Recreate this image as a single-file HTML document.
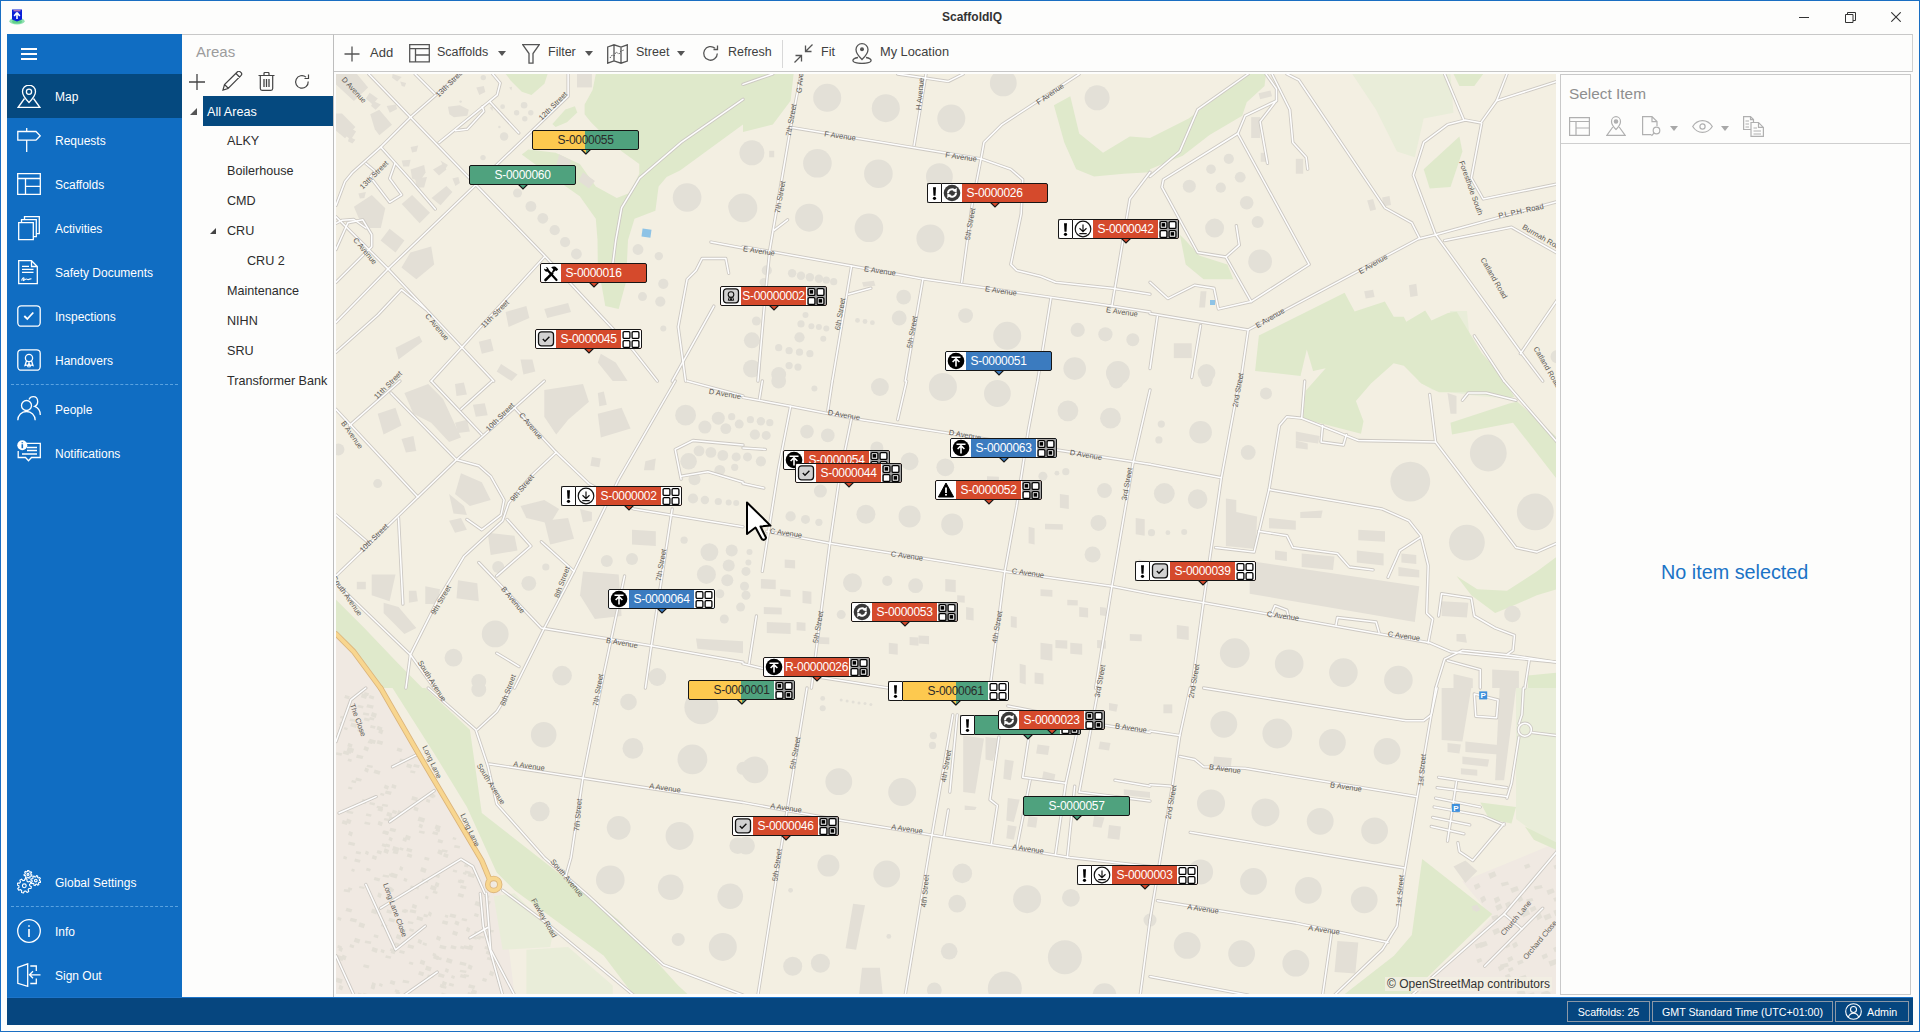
<!DOCTYPE html>
<html><head><meta charset="utf-8">
<style>
*{margin:0;padding:0;box-sizing:border-box}
html,body{width:1920px;height:1032px;overflow:hidden;background:#fcfcfc;font-family:"Liberation Sans",sans-serif}
.a{position:absolute}
#win{position:absolute;left:0;top:0;width:1920px;height:1032px;border:1px solid #1a6ec2;background:#fdfdfc}
.t{position:absolute;white-space:nowrap;line-height:1}
#side{left:7px;top:34px;width:175px;height:963px;background:#106dc2}
.nav{position:absolute;left:0;width:175px;height:44px}
.nav .t{left:48px;top:15px;color:#fff;font-size:12px}
.nav svg{position:absolute;left:9px;top:10px}
.sep{position:absolute;left:4px;width:167px;height:0;border-top:1px dashed #5aa2e0}
#areas{left:182px;top:34px;width:152px;height:963px;border-top:1px solid #c8c8c8;border-right:1px solid #bdbdbd;background:#fdfdfc}
.tr{position:absolute;font-size:12.6px;color:#2c2c2c;white-space:nowrap;line-height:1}
#tb{left:334px;top:34px;width:1579px;height:38px;border-top:1px solid #c8c8c8;border-bottom:1px solid #c6c6c6;border-right:1px solid #d0d0d0;background:#fdfdfc}
.tbt{position:absolute;top:11px;font-size:13px;color:#404040;line-height:1;white-space:nowrap}
#map{left:336px;top:74px;width:1220px;height:920px;overflow:hidden;background:#f3efe2}
#rp{left:1560px;top:74px;width:351px;height:921px;border:1px solid #c9c9c9;background:#fdfdfc}
#status{left:7px;top:997px;width:1906px;height:28px;background:#06467f;border-top:1px solid #1d74c9}
.sb{position:absolute;top:3px;height:21px;border:1px solid #8c98a6;color:#fff;font-size:10.7px;line-height:21px;text-align:center;white-space:nowrap}
.mk{position:absolute;width:107px;height:20px;border:1px solid #161616;border-radius:2px;overflow:hidden;font-size:12px;letter-spacing:-0.3px;line-height:18px;text-align:center;white-space:nowrap}
.mk span{position:relative}
.mx{position:absolute;width:14px;height:20px;border:1px solid #161616;border-right:none;border-radius:2px 0 0 2px;background:#fff}
.mx svg{position:absolute;left:0;top:0}
</style></head><body>
<div id="win">
</div>
<!-- title bar -->
<svg class="a" style="left:8px;top:8px" width="20" height="18" viewBox="0 0 20 18">
  <ellipse cx="9" cy="13.2" rx="7.6" ry="3.4" fill="#8fe0b0"/>
  <ellipse cx="9" cy="13.6" rx="5" ry="2" fill="#5fd08a"/>
  <path d="M4 1.5H14V11.5L9 13.5 4 11.5z" fill="#0a1fd8"/>
  <path d="M9 4.5L6.2 8 M9 4.5L11.8 8 M9 4.6V11" stroke="#fff" stroke-width="1.6" fill="none"/>
  <rect x="5.5" y="2.3" width="7" height="1" fill="#f48fb0"/>
</svg>
<div class="t" style="left:942px;top:11px;font-size:12px;font-weight:bold;color:#333">ScaffoldIQ</div>
<div class="a" style="left:1799px;top:17px;width:10px;height:1px;background:#333"></div>
<svg class="a" style="left:1845px;top:12px" width="11" height="11" viewBox="0 0 11 11"><path d="M0.5 2.5h7.5v8h-7.5z M2.5 2.5V0.5h8v8H8" fill="none" stroke="#333" stroke-width="1"/></svg>
<svg class="a" style="left:1891px;top:12px" width="10" height="10" viewBox="0 0 10 10"><path d="M0.3 0.3L9.7 9.7M9.7 0.3L0.3 9.7" stroke="#333" stroke-width="1.1"/></svg>

<svg class="a" style="left:1906px;top:1018px" width="8" height="8" viewBox="0 0 8 8"><g fill="#555"><rect x="6" y="0" width="1" height="1"/><rect x="4" y="2" width="1" height="1"/><rect x="6" y="2" width="1" height="1"/><rect x="2" y="4" width="1" height="1"/><rect x="4" y="4" width="1" height="1"/><rect x="6" y="4" width="1" height="1"/><rect x="0" y="6" width="1" height="1"/><rect x="2" y="6" width="1" height="1"/><rect x="4" y="6" width="1" height="1"/><rect x="6" y="6" width="1" height="1"/></g></svg>
<div id="side" class="a">
<div class="a" style="left:14px;top:14px;width:16px;height:2px;background:#fff"></div>
<div class="a" style="left:14px;top:19px;width:16px;height:2px;background:#fff"></div>
<div class="a" style="left:14px;top:24px;width:16px;height:2px;background:#fff"></div>
<div class="a" style="left:0;top:40px;width:175px;height:44px;background:#05497f"></div>
<!-- Map -->
<svg class="a" style="left:10px;top:50px" width="24" height="24" viewBox="0 0 24 24" fill="none" stroke="#fff" stroke-width="1.3">
<path d="M12 1.2C8.2 1.2 5.5 4 5.5 7.7c0 4 6.5 10.8 6.5 10.8s6.5-6.8 6.5-10.8C18.5 4 15.8 1.2 12 1.2z"/><circle cx="12" cy="7.8" r="2.6"/><path d="M7.5 14.5L1.2 23.3h21.6L16.5 14.5"/></svg>
<div class="t" style="left:48px;top:57px;font-size:12px;color:#fff">Map</div>
<!-- Requests -->
<svg class="a" style="left:10px;top:94px" width="24" height="24" viewBox="0 0 24 24" fill="none" stroke="#fff" stroke-width="1.3">
<path d="M0.8 3.5H19l4.2 4.3L19 12.2H0.8z M9.7 0V3.5 M9.7 12.2V24"/></svg>
<div class="t" style="left:48px;top:101px;font-size:12px;color:#fff">Requests</div>
<!-- Scaffolds -->
<svg class="a" style="left:10px;top:139px" width="24" height="22" viewBox="0 0 24 22" fill="none" stroke="#fff" stroke-width="1.3">
<path d="M0.7 0.7H23.3V21.3H0.7z M0.7 5.5H23.3 M8.5 5.5V21.3 M8.5 13.3H23.3"/></svg>
<div class="t" style="left:48px;top:145px;font-size:12px;color:#fff">Scaffolds</div>
<!-- Activities -->
<svg class="a" style="left:10px;top:182px" width="24" height="25" viewBox="0 0 24 25" fill="none" stroke="#fff" stroke-width="1.3">
<path d="M1.7 6.7H16.3V23.7H1.7z M4.5 6.7V3.7H19.3V20.7H16.3 M7.5 3.7V0.7H22.3V17.7H19.3"/></svg>
<div class="t" style="left:48px;top:189px;font-size:12px;color:#fff">Activities</div>
<!-- Safety Documents -->
<svg class="a" style="left:10px;top:226px" width="24" height="25" viewBox="0 0 24 25" fill="none" stroke="#fff" stroke-width="1.3">
<path d="M1.7 0.7H14.5L20.3 6.5V23.7H1.7z M14.5 0.7V6.5H20.3 M5 6.3H12 M5 9.3H16.5 M5 12.3H16.5"/><path d="M4.5 20.5c1-2 2-3.5 2.5-2.5s-1.5 3-.5 2.5 2-1.5 3-1.5 1 1 2 .5 2-1 3-.5" stroke-width="1.1"/></svg>
<div class="t" style="left:48px;top:233px;font-size:12px;color:#fff">Safety Documents</div>
<!-- Inspections -->
<svg class="a" style="left:10px;top:271px" width="24" height="22" viewBox="0 0 24 22" fill="none" stroke="#fff" stroke-width="1.3">
<rect x="0.8" y="0.8" width="22.4" height="20.4" rx="3.5"/><path d="M7.3 11l3 3 6-6.5" stroke-width="1.8"/></svg>
<div class="t" style="left:48px;top:277px;font-size:12px;color:#fff">Inspections</div>
<!-- Handovers -->
<svg class="a" style="left:10px;top:315px" width="24" height="22" viewBox="0 0 24 22" fill="none" stroke="#fff" stroke-width="1.3">
<rect x="0.8" y="0.8" width="22.4" height="20.4" rx="3.5"/><circle cx="12" cy="9" r="3.6"/><path d="M9.5 11.8L8 16.5l2-.6 1 1.6 1-3.5 1 3.5 1-1.6 2 .6-1.5-4.7"/></svg>
<div class="t" style="left:48px;top:321px;font-size:12px;color:#fff">Handovers</div>
<div class="sep" style="top:350px"></div>
<!-- People -->
<svg class="a" style="left:10px;top:362px" width="24" height="25" viewBox="0 0 24 25" fill="none" stroke="#fff" stroke-width="1.3">
<circle cx="9.5" cy="9.5" r="5"/><path d="M0.8 24.3c0-5.3 3.9-8.8 8.7-8.8s8.7 3.5 8.7 8.8"/><path d="M12 3.5c.8-1.8 2.4-2.8 4.2-2.8 2.8 0 4.5 2.2 4.5 5 0 2.2-1.2 4-3 4.6 3.4 1.3 5.6 4.5 5.6 8.6"/></svg>
<div class="t" style="left:48px;top:370px;font-size:12px;color:#fff">People</div>
<!-- Notifications -->
<svg class="a" style="left:10px;top:406px" width="24" height="24" viewBox="0 0 24 24" fill="none" stroke="#fff" stroke-width="1.3">
<path d="M7 3.3H23.3V17.5H14.5L11.5 20.8 8.5 17.5H1.2V11"/><path d="M10 7.5H20 M10 10.5H20 M5 14H20"/><circle cx="5.3" cy="5.3" r="5" fill="#fff" stroke="none"/><path d="M5.3 4.3V8.3 M5.3 2.2V3.2" stroke="#106dc2" stroke-width="1.6"/></svg>
<div class="t" style="left:48px;top:414px;font-size:12px;color:#fff">Notifications</div>
<!-- Global Settings -->
<svg class="a" style="left:10px;top:836px" width="24" height="24" viewBox="0 0 24 24" fill="none" stroke="#fff" stroke-width="1.1" stroke-linejoin="round"><path d="M12.70 15.80 L14.45 16.65 L13.95 18.56 L12.01 18.44 L11.12 19.62 L11.76 21.45 L10.06 22.45 L8.77 21.00 L7.30 21.20 L6.45 22.95 L4.54 22.45 L4.66 20.51 L3.48 19.62 L1.65 20.26 L0.65 18.56 L2.10 17.27 L1.90 15.80 L0.15 14.95 L0.65 13.04 L2.59 13.16 L3.48 11.98 L2.84 10.15 L4.54 9.15 L5.83 10.60 L7.30 10.40 L8.15 8.65 L10.06 9.15 L9.94 11.09 L11.12 11.98 L12.95 11.34 L13.95 13.04 L12.50 14.33Z"/><circle cx="7.3" cy="15.8" r="1.9"/><path d="M22.50 10.60 L23.77 11.19 L23.42 12.51 L22.03 12.41 L21.42 13.22 L21.90 14.53 L20.71 15.22 L19.80 14.16 L18.80 14.30 L18.21 15.57 L16.89 15.22 L16.99 13.83 L16.18 13.22 L14.87 13.70 L14.18 12.51 L15.24 11.60 L15.10 10.60 L13.83 10.01 L14.18 8.69 L15.57 8.79 L16.18 7.98 L15.70 6.67 L16.89 5.98 L17.80 7.04 L18.80 6.90 L19.39 5.63 L20.71 5.98 L20.61 7.37 L21.42 7.98 L22.73 7.50 L23.42 8.69 L22.36 9.60Z"/><circle cx="18.8" cy="10.6" r="1.3"/><path d="M13.90 4.40 L14.96 4.94 L14.60 6.14 L13.42 6.00 L12.81 6.67 L13.05 7.83 L11.89 8.30 L11.26 7.29 L10.35 7.23 L9.59 8.14 L8.51 7.53 L8.90 6.40 L8.39 5.66 L7.20 5.64 L7.00 4.40 L8.13 4.01 L8.39 3.14 L7.66 2.20 L8.51 1.27 L9.51 1.91 L10.35 1.57 L10.64 0.42 L11.89 0.50 L12.02 1.68 L12.81 2.13 L13.89 1.64 L14.60 2.66 L13.76 3.50Z"/><circle cx="11" cy="4.4" r="1.0"/></svg>
<div class="t" style="left:48px;top:843px;font-size:12px;color:#fff">Global Settings</div>
<div class="sep" style="top:872px"></div>
<!-- Info -->
<svg class="a" style="left:10px;top:885px" width="24" height="24" viewBox="0 0 24 24" fill="none" stroke="#fff" stroke-width="1.3">
<circle cx="12" cy="12" r="11.3"/><path d="M12 10V18 M12 6.2V7.8" stroke-width="1.6"/></svg>
<div class="t" style="left:48px;top:892px;font-size:12px;color:#fff">Info</div>
<!-- Sign Out -->
<svg class="a" style="left:10px;top:929px" width="24" height="24" viewBox="0 0 24 24" fill="none" stroke="#fff" stroke-width="1.3">
<path d="M0.8 4.3L10.7 0.8V23.3L0.8 20.3z M13.3 3H19.3V8 M13.3 20.5H19.3V15.5 M12.5 11.8H23.5 M16 8.3L12.5 11.8 16 15.3"/></svg>
<div class="t" style="left:48px;top:936px;font-size:12px;color:#fff">Sign Out</div>
</div>
<div id="areas" class="a">
<div class="t" style="left:14px;top:9px;font-size:15px;color:#9c9c9c">Areas</div>
<svg class="a" style="left:7px;top:39px" width="16" height="16" viewBox="0 0 16 16" stroke="#444" stroke-width="1.3"><path d="M8 0V16 M0 8H16"/></svg>
<svg class="a" style="left:40px;top:36px" width="21" height="20" viewBox="0 0 21 20" fill="none" stroke="#444" stroke-width="1.2"><path d="M1 19L2.5 13.5 15.5 0.8c.8-.7 2-.7 2.7 0l.9.9c.7.7.7 1.9 0 2.7L6.1 17.5z M2.5 13.5l4 4 M14 2.5l4 4"/></svg>
<svg class="a" style="left:76px;top:37px" width="17" height="19" viewBox="0 0 17 19" fill="none" stroke="#444" stroke-width="1.2"><path d="M0.5 3.5H16.5 M6 3.3V1.5c0-.6.4-1 1-1h3c.6 0 1 .4 1 1v1.8 M2.3 3.5V16.5c0 1 .8 1.8 1.8 1.8h8.8c1 0 1.8-.8 1.8-1.8V3.5"/><path d="M6 7V15 M8.5 7V15 M11 7V15" stroke-width="1.3"/></svg>
<svg class="a" style="left:112px;top:39px" width="16" height="16" viewBox="0 0 16 16" fill="none" stroke="#444" stroke-width="1.2"><path d="M14.2 7.5A6.3 6.3 0 1 1 12 3.1"/><path d="M14.5 0.5V4.5H10.5"/></svg>
<div class="a" style="left:21px;top:61px;width:130px;height:30px;background:#05497f"></div>
<svg class="a" style="left:8px;top:73px" width="7" height="7" viewBox="0 0 7 7"><path d="M7 0V7H0z" fill="#555"/></svg>
<div class="tr" style="left:25px;top:71px;color:#fff">All Areas</div>
<div class="tr" style="left:45px;top:100px">ALKY</div>
<div class="tr" style="left:45px;top:130px">Boilerhouse</div>
<div class="tr" style="left:45px;top:160px">CMD</div>
<svg class="a" style="left:28px;top:193px" width="6" height="6" viewBox="0 0 6 6"><path d="M6 0V6H0z" fill="#444"/></svg>
<div class="tr" style="left:45px;top:190px">CRU</div>
<div class="tr" style="left:65px;top:220px">CRU 2</div>
<div class="tr" style="left:45px;top:250px">Maintenance</div>
<div class="tr" style="left:45px;top:280px">NIHN</div>
<div class="tr" style="left:45px;top:310px">SRU</div>
<div class="tr" style="left:45px;top:340px">Transformer Bank</div>
</div>
<div id="tb" class="a">
<svg class="a" style="left:10px;top:11px" width="16" height="16" viewBox="0 0 16 16" stroke="#555" stroke-width="1.3"><path d="M8 0.5V15.5 M0.5 8H15.5"/></svg>
<div class="tbt" style="left:36px">Add</div>
<svg class="a" style="left:75px;top:9px" width="21" height="19" viewBox="0 0 21 19" fill="none" stroke="#555" stroke-width="1.3"><path d="M0.7 0.7H20.3V17.8H0.7z M0.7 4.7H20.3 M6.5 4.7V17.8 M6.5 11H20.3"/></svg>
<div class="tbt" style="left:103px;font-size:12.5px">Scaffolds</div>
<svg class="a" style="left:164px;top:16px" width="8" height="5" viewBox="0 0 8 5"><path d="M0 0H8L4 5z" fill="#555"/></svg>
<svg class="a" style="left:188px;top:9px" width="18" height="20" viewBox="0 0 18 20" fill="none" stroke="#555" stroke-width="1.3"><path d="M0.7 0.7H17.3L11 9.5V19.2H7V9.5z"/></svg>
<div class="tbt" style="left:214px;font-size:12.5px">Filter</div>
<svg class="a" style="left:251px;top:16px" width="8" height="5" viewBox="0 0 8 5"><path d="M0 0H8L4 5z" fill="#555"/></svg>
<svg class="a" style="left:273px;top:9px" width="21" height="20" viewBox="0 0 21 20" fill="none" stroke="#555" stroke-width="1.3"><path d="M0.7 3L7 0.8 14 3 20.3 0.8V17L14 19.2 7 17 0.7 19.2z M7 0.8V17 M14 3V19.2"/><path d="M3 14l2-3 2 1 2-4 3 2 2-3 3-1" stroke-width="1" stroke-dasharray="1.5 1.2"/></svg>
<div class="tbt" style="left:302px;font-size:12.5px">Street</div>
<svg class="a" style="left:343px;top:16px" width="8" height="5" viewBox="0 0 8 5"><path d="M0 0H8L4 5z" fill="#555"/></svg>
<svg class="a" style="left:368px;top:10px" width="17" height="17" viewBox="0 0 17 17" fill="none" stroke="#555" stroke-width="1.3"><path d="M15.3 8.5A6.8 6.8 0 1 1 13 3.3"/><path d="M15.5 0.5V4.5H11.5"/></svg>
<div class="tbt" style="left:394px;font-size:12.5px">Refresh</div>
<div class="a" style="left:448px;top:5px;width:1px;height:28px;background:#d8d8d8"></div>
<svg class="a" style="left:459px;top:8px" width="21" height="21" viewBox="0 0 21 21" fill="none" stroke="#555" stroke-width="1.3"><path d="M19.5 1.5L12.5 8.5 M12.5 2.5V8.5H18.5 M1.5 19.5L8.5 12.5 M2.5 12.5H8.5V18.5"/></svg>
<div class="tbt" style="left:487px;font-size:12.5px">Fit</div>
<svg class="a" style="left:518px;top:8px" width="20" height="21" viewBox="0 0 20 21" fill="none" stroke="#555" stroke-width="1.3"><path d="M10 16.5S4 10.8 4 6.5C4 3.2 6.7 0.7 10 0.7s6 2.5 6 5.8c0 4.3-6 10-6 10z"/><circle cx="10" cy="6.3" r="2" fill="#555" stroke="none"/><path d="M6 14.5C3 15 0.9 16.2 0.9 17.6c0 1.6 4 2.8 9.1 2.8s9.1-1.2 9.1-2.8c0-1.4-2.1-2.6-5.1-3.1"/></svg>
<div class="tbt" style="left:546px;font-size:12.8px">My Location</div>
</div>
<div id="map" class="a"><!--MAPSTART--><svg class="a" style="left:0;top:0" width="1220" height="920" viewBox="0 0 1220 920">
<g fill="#f0e9e2"><polygon points="0.0,561.4 17.9,579.2 44.6,614.1 0.0,614.1"/><polygon points="0.0,614.0 44.6,614.0 145.8,786.6 166.6,822.3 178.5,921.1 0.0,921.1"/><polygon points="1126.4,807.4 1221.0,768.7 1221.0,921.1 1081.8,921.1 1156.2,843.1"/></g>
<g fill="#e9edd9"><polygon points="1016.3,0.0 1114.5,0.0 1117.5,38.7 1087.7,44.6 1078.8,83.3 1061.0,77.4 1040.1,35.7"/><polygon points="1081.8,307.0 1171.0,307.0 1177.0,324.9 1141.3,321.9 1096.7,315.9"/><polygon points="157.7,822.3 178.5,819.3 217.2,858.0 214.2,872.9 166.6,875.8"/><polygon points="190.4,875.8 232.1,872.9 276.7,911.5 276.7,921.1 190.4,921.1"/><polygon points="1180.0,614.0 1221.0,614.0 1221.0,774.7 1180.0,744.9"/><polygon points="1114.0,237.0 1131.0,237.0 1138.0,309.0 1122.0,311.0"/></g>
<g fill="#dfe9cb"><polygon points="407.0,0.0 457.6,0.0 454.6,26.8 436.8,50.6 407.0,58.0"/><polygon points="717.9,31.2 734.3,22.3 743.2,59.5 767.0,78.8 793.8,62.5 814.0,64.0 814.0,98.2 787.8,99.7 758.1,102.6 740.2,95.2 728.3,68.4"/><polygon points="814.0,64.0 852.7,44.6 912.2,0.0 930.0,0.0 928.5,11.9 910.7,28.3 906.2,41.7 873.5,61.0 846.7,81.8 814.0,95.2"/><polygon points="1087.7,95.2 1123.4,62.5 1126.4,77.4 1114.5,113.1 1093.7,114.5"/><polygon points="843.8,160.7 849.7,166.6 863.1,181.5 891.4,190.4 897.3,205.3 867.6,205.3 849.7,190.4"/><polygon points="1117.5,0.0 1147.2,0.0 1138.3,11.9 1123.4,11.9"/><polygon points="0.0,525.7 28.3,554.0 59.5,586.7 86.3,614.1 47.6,614.1 26.8,589.7 11.9,568.8 0.0,559.9"/><polygon points="1114.5,348.7 1174.0,329.3 1181.5,327.8 1221.0,363.5 1221.0,405.2 1177.0,348.7 1116.0,360.6"/><polygon points="1120.5,501.9 1141.3,515.3 1171.0,516.8 1200.8,497.4 1221.0,482.5 1221.0,515.3 1200.8,521.2 1174.0,533.1 1159.1,539.1 1135.3,521.2"/><polygon points="1191.9,601.6 1221.0,598.6 1221.0,614.1 1191.9,614.1"/><polygon points="56.5,614.0 89.3,614.0 133.9,655.7 145.8,739.0 214.2,792.5 282.7,846.1 342.2,911.5 352.6,921.1 297.5,921.1 267.8,881.8 178.5,816.3 160.7,798.5 130.9,733.0 98.2,679.5"/><polygon points="1086.2,785.1 1156.2,840.1 1072.9,921.1 1007.4,921.1 1058.0,881.8 1075.8,861.0"/><polygon points="1144.3,728.5 1180.0,733.0 1175.5,749.4 1153.2,744.9"/><polygon points="1188.9,752.4 1221.0,768.7 1221.0,776.2 1197.8,765.7"/><polygon points="259.8,0.0 407.0,0.0 407.0,50.6 344.0,96.5 330.6,103.0 322.6,112.6 319.4,136.8 298.5,144.8 292.0,166.0 290.0,208.0 282.7,235.0 269.3,232.0 261.8,190.4 261.5,166.0 259.8,144.8 243.8,122.3 216.4,103.0 185.8,80.5 192.3,75.6 219.6,78.8 250.2,48.3 248.6,40.2 248.6,30.6 256.6,16.0"/><polygon points="169.7,0.0 211.6,0.0 208.4,9.7 195.5,20.9 185.8,17.7 174.6,6.4"/><polygon points="216.4,49.9 229.3,35.4 238.9,32.2 241.3,38.6 230.9,48.3 219.6,53.1"/><polygon points="922.9,261.6 1008.6,218.8 1018.6,237.6 1048.9,227.6 1057.7,242.7 1067.8,242.7 1070.3,247.7 1089.2,236.4 1095.5,246.5 1111.9,238.9 1120.7,237.7 1145.9,279.2 1166.0,301.9 1178.6,323.3 1156.0,322.0 1130.8,318.3 1103.0,318.3 1085.4,309.5 1067.8,291.8 1057.7,289.3 1035.0,309.5 1019.9,327.1 1027.5,347.2 1025.0,359.8 967.0,344.7 969.5,317.0 989.7,294.3 977.1,296.9 970.8,275.4 964.5,301.9 919.1,296.9"/></g>
<g fill="#f3efe2"><polygon points="219.6,78.8 243.8,90.1 259.8,112.6 280.8,123.9 293.6,119.1 303.3,99.8 303.3,90.1 285.6,77.2 272.7,64.4 263.1,56.3 255.0,48.3 248.6,40.2"/></g>
<g fill="#e3dfd6"><polygon points="53.6,154.7 68.4,166.6 59.5,178.5 44.6,166.6"/><polygon points="74.4,178.5 95.2,172.6 98.2,190.4 80.3,205.3 65.5,193.4"/><polygon points="165.1,290.1 181.5,300.5 175.5,307.1 160.7,297.5"/><polygon points="264.8,279.7 279.7,288.6 291.6,307.1 276.7,307.1 261.8,288.6"/><polygon points="241.0,0.0 255.9,0.0 255.9,13.4 241.0,13.4"/><polygon points="223.1,80.3 235.0,86.3 232.1,98.2 220.2,92.2"/><polygon points="247.0,98.2 258.9,107.1 252.9,114.5 242.5,107.1"/><polygon points="169.6,238.0 190.4,232.1 193.4,244.0 172.6,252.9"/><polygon points="208.3,235.0 232.1,229.1 235.0,238.0 211.2,244.0"/><polygon points="59.5,273.7 83.3,261.8 86.3,267.8 62.5,285.6"/><polygon points="142.8,267.8 154.7,264.8 157.7,276.7 145.8,279.7"/><polygon points="184.5,285.6 196.4,285.6 199.3,297.5 187.4,300.5"/><polygon points="0.0,0.0 20.9,0.0 32.1,13.4 17.9,26.9 0.0,10.4"/><polygon points="33.6,18.7 41.8,24.6 36.6,30.6 29.9,24.6"/><polygon points="37.3,26.9 44.8,30.6 39.6,35.8 35.1,32.1"/><polygon points="0.0,39.6 6.0,39.6 19.4,53.0 9.0,64.2 0.0,56.7"/><polygon points="34.3,40.3 43.3,35.8 56.0,50.7 43.3,61.2 38.8,55.2"/><polygon points="11.9,52.2 20.1,57.5 14.9,65.7 9.0,61.2"/><polygon points="50.7,32.1 59.7,30.6 61.2,35.1 53.7,38.8"/><polygon points="56.7,0.0 65.7,3.0 61.2,7.5 56.0,3.7"/><polygon points="64.2,7.5 70.1,9.0 68.7,12.7 65.7,11.9"/><polygon points="111.9,32.8 123.9,31.3 132.8,35.8 131.3,41.8 117.9,43.3 113.4,40.3"/><polygon points="140.3,13.4 147.8,11.9 149.3,17.9 143.3,20.9"/><polygon points="74.6,73.1 82.1,71.6 80.6,77.6 76.1,78.4"/><polygon points="65.7,86.6 74.6,85.8 73.1,92.5 67.2,92.5"/><polygon points="74.6,95.5 88.1,91.0 89.6,98.5 83.6,107.5 76.1,104.5"/><polygon points="79.1,104.5 91.0,103.0 88.1,113.4 80.6,113.4"/><polygon points="97.0,95.5 107.5,89.6 110.4,95.5 103.0,101.5"/><polygon points="104.5,86.6 111.9,91.0 109.0,95.5"/><polygon points="116.4,104.5 122.4,103.0 123.9,109.0 119.4,111.9"/><polygon points="95.5,123.9 110.4,111.9 116.4,117.9 104.5,131.3"/><polygon points="65.7,129.9 76.1,120.9 94.0,138.8 83.6,149.3"/><polygon points="17.9,132.8 35.8,120.9 49.3,134.3 44.8,154.0 26.9,154.0"/><polygon points="22.4,119.4 29.9,117.9 28.4,123.9 23.9,124.6"/><polygon points="153.7,33.6 156.7,32.8 156.7,37.3"/><polygon points="173.1,13.4 176.1,12.7 175.4,16.4"/><polygon points="13.4,62.7 19.4,65.7 16.4,69.4 11.9,67.2"/><polygon points="433.2,76.8 438.2,76.8 438.2,83.3 433.2,83.3"/><polygon points="526.0,208.3 537.9,206.8 539.4,211.8 527.5,212.7"/><polygon points="915.2,43.1 924.1,43.1 924.1,64.0 915.2,64.0"/><polygon points="959.8,84.8 967.2,84.8 967.2,99.7 959.8,99.7"/><polygon points="864.6,217.2 870.5,217.2 869.0,233.6 863.1,233.6"/><polygon points="837.8,269.3 855.7,269.3 855.7,284.1 837.8,284.1"/><polygon points="1028.2,217.2 1037.1,215.7 1038.6,223.1 1029.7,224.6"/><polygon points="1072.9,211.2 1080.3,209.8 1081.8,221.7 1074.3,223.1"/><polygon points="922.6,19.3 934.5,16.4 936.0,22.3 924.1,25.3"/><polygon points="924.7,78.8 930.6,78.8 930.6,87.8 924.7,87.8"/><polygon points="1031.2,126.5 1037.1,125.0 1040.1,135.4 1034.2,136.9"/><polygon points="1046.1,123.5 1053.5,122.0 1055.0,130.9 1047.6,132.4"/><polygon points="68.4,318.9 92.2,310.0 107.1,324.9 125.0,363.5 113.1,368.0 95.2,348.7 77.4,339.7"/><polygon points="41.7,339.7 59.5,333.8 65.5,351.6 47.6,360.6"/><polygon points="65.5,365.0 77.4,362.0 80.3,376.9 69.9,378.4"/><polygon points="119.0,310.0 127.9,308.5 130.9,320.4 120.5,321.9"/><polygon points="136.9,330.8 148.8,329.3 151.7,341.2 139.8,342.7"/><polygon points="119.0,348.7 130.9,345.7 133.9,357.6 122.0,359.1"/><polygon points="208.3,315.9 247.0,310.0 252.9,327.8 232.1,345.7 220.2,360.6 208.3,342.7"/><polygon points="261.8,318.9 267.8,317.4 270.8,330.8 263.3,332.3"/><polygon points="261.8,339.7 285.6,333.8 294.6,354.6 264.8,363.5"/><polygon points="125.0,399.2 145.8,408.2 154.7,426.0 133.9,432.0 119.0,420.1"/><polygon points="113.1,420.1 127.9,432.0 130.9,440.9 117.5,439.4"/><polygon points="113.1,446.8 125.0,443.9 130.9,455.8 119.0,458.7"/><polygon points="184.5,432.0 208.3,426.0 223.1,434.9 214.2,449.8 190.4,443.9"/><polygon points="208.3,446.8 232.1,443.9 238.0,464.7 214.2,470.6"/><polygon points="244.0,434.9 255.9,437.9 255.9,446.8 247.0,448.3"/><polygon points="151.7,458.7 178.5,461.7 181.5,476.6 154.7,481.1"/><polygon points="247.0,497.4 282.7,500.4 285.6,542.0 258.9,545.0 244.0,521.2"/><polygon points="296.0,455.8 319.8,457.3 319.8,472.1 296.0,470.6"/><polygon points="360.0,564.4 407.0,567.3 407.0,579.2 361.5,574.8"/><polygon points="35.7,500.4 59.5,500.4 53.6,527.2 35.7,521.2"/><polygon points="47.6,528.7 62.5,533.1 80.3,554.0 68.4,559.9 47.6,539.1"/><polygon points="89.3,512.3 104.1,515.3 101.2,530.1 89.3,530.1"/><polygon points="122.0,506.3 141.3,509.3 142.8,527.2 120.5,524.2"/><polygon points="72.9,516.8 80.3,516.8 81.8,527.2 72.9,528.7"/><polygon points="20.8,507.8 29.8,507.8 29.8,515.3 20.8,515.3"/><polygon points="255.9,382.9 264.8,384.4 263.3,393.3 254.4,391.8"/><polygon points="309.4,387.3 319.8,384.4 318.4,396.3 307.9,396.3"/><polygon points="424.9,504.9 439.7,505.7 439.7,515.3 424.9,514.4"/><polygon points="444.2,515.3 454.6,515.9 454.6,522.7 444.2,522.1"/><polygon points="466.5,516.8 475.4,517.8 475.4,530.1 466.5,529.1"/><polygon points="448.7,485.5 459.1,486.2 459.1,494.4 448.7,493.7"/><polygon points="427.8,533.1 445.7,533.7 445.7,540.6 427.8,540.0"/><polygon points="430.8,548.0 454.6,549.0 454.6,559.9 430.8,558.9"/><polygon points="460.6,548.0 469.5,548.7 469.5,556.9 460.6,556.2"/><polygon points="481.4,562.9 493.3,563.5 493.3,570.3 481.4,569.7"/><polygon points="552.8,568.8 561.7,569.8 561.7,580.7 552.8,579.8"/><polygon points="582.5,561.4 593.0,562.1 593.0,570.3 582.5,569.6"/><polygon points="609.3,504.9 619.7,505.9 619.7,518.2 609.3,517.2"/><polygon points="621.2,521.2 628.7,521.8 628.7,528.7 621.2,528.1"/><polygon points="597.4,533.1 606.3,533.8 606.3,542.0 597.4,541.3"/><polygon points="630.1,533.1 637.6,534.2 637.6,546.5 630.1,545.4"/><polygon points="674.8,542.0 680.7,543.0 680.7,554.0 674.8,553.0"/><polygon points="704.5,515.3 716.4,515.9 716.4,522.7 704.5,522.1"/><polygon points="731.3,525.7 741.7,526.2 741.7,531.6 731.3,531.2"/><polygon points="743.2,533.1 752.1,534.0 752.1,543.5 743.2,542.7"/><polygon points="764.0,533.1 770.0,533.8 770.0,542.0 764.0,541.3"/><polygon points="704.5,568.8 716.4,570.3 716.4,586.7 704.5,585.3"/><polygon points="719.4,565.9 731.3,566.6 731.3,574.8 719.4,574.1"/><polygon points="734.3,568.8 746.2,569.8 746.2,580.7 734.3,579.8"/><polygon points="761.1,565.9 770.0,566.6 770.0,574.8 761.1,574.1"/><polygon points="692.6,452.8 698.6,454.2 698.6,470.6 692.6,469.2"/><polygon points="709.0,449.8 726.8,450.3 726.8,455.8 709.0,455.3"/><polygon points="723.9,420.1 732.8,421.3 732.8,434.9 723.9,433.7"/><polygon points="799.7,443.9 808.7,445.3 808.7,461.7 799.7,460.3"/><polygon points="802.7,485.5 810.2,486.7 810.2,500.4 802.7,499.2"/><polygon points="573.6,562.9 582.5,563.6 582.5,571.8 573.6,571.1"/><polygon points="683.7,589.7 689.7,591.3 689.7,610.5 683.7,608.8"/><polygon points="698.6,598.6 707.5,599.5 707.5,610.5 698.6,609.5"/><polygon points="793.8,559.9 805.7,560.5 805.7,567.3 793.8,566.7"/><polygon points="651.0,402.2 662.9,402.7 662.9,408.2 651.0,407.7"/><polygon points="913.7,487.0 1083.3,512.3 1078.8,548.0 913.7,519.7"/><polygon points="889.9,424.5 900.3,426.0 900.3,437.9 921.1,442.4 919.6,475.1 889.9,472.1"/><polygon points="933.0,443.9 959.8,446.8 959.8,455.8 933.0,454.3"/><polygon points="965.7,479.6 998.5,482.5 997.0,495.9 965.7,493.0"/><polygon points="1022.3,455.8 1049.0,457.3 1049.0,467.7 1022.3,466.2"/><polygon points="1020.8,476.6 1047.6,479.6 1047.6,491.5 1020.8,488.5"/><polygon points="1065.4,479.6 1080.3,481.1 1080.3,490.0 1065.4,488.5"/><polygon points="1062.4,493.0 1083.3,495.9 1083.3,503.4 1062.4,501.9"/><polygon points="959.8,357.6 983.6,362.0 982.1,369.5 959.8,366.5"/><polygon points="959.8,366.5 971.7,369.5 971.7,375.4 959.8,373.9"/><polygon points="964.3,437.9 986.6,436.4 985.1,443.9 964.3,443.9"/><polygon points="1105.6,527.2 1132.4,528.7 1130.9,543.5 1105.6,542.0"/><polygon points="939.0,476.6 950.9,478.1 950.9,487.0 939.0,485.5"/><polygon points="840.8,551.0 852.7,552.5 852.7,565.9 840.8,564.4"/><polygon points="1117.5,600.1 1136.8,604.5 1136.8,614.1 1117.5,614.1"/><polygon points="1156.2,595.6 1182.9,597.1 1182.9,614.1 1156.2,614.1"/><polygon points="1120.5,559.9 1129.4,559.9 1130.9,568.8 1120.5,567.3"/><polygon points="1111.5,318.9 1120.5,321.9 1120.5,339.7 1114.5,339.7"/><polygon points="36.8,781.1 41.1,782.6 40.0,786.1 35.7,784.5"/><polygon points="2.0,871.1 5.9,872.3 5.1,875.0 1.2,873.8"/><polygon points="98.2,880.5 103.1,882.2 101.8,885.9 97.0,884.3"/><polygon points="117.3,795.5 121.4,796.5 120.6,798.7 116.6,797.7"/><polygon points="111.2,883.8 116.7,885.7 115.4,889.8 109.8,888.0"/><polygon points="61.1,859.9 65.7,861.8 64.3,865.9 59.7,864.1"/><polygon points="21.0,680.6 27.5,682.0 26.4,685.1 20.0,683.7"/><polygon points="78.5,732.5 82.7,734.0 81.6,737.4 77.3,735.9"/><polygon points="90.4,891.6 95.8,893.5 94.4,897.6 89.0,895.8"/><polygon points="132.5,918.3 137.9,919.4 137.0,921.9 131.7,920.8"/><polygon points="133.2,910.2 139.4,911.7 138.2,915.0 132.0,913.6"/><polygon points="128.7,790.1 132.7,791.1 131.9,793.4 127.9,792.4"/><polygon points="132.1,917.9 135.4,919.6 134.1,923.5 130.8,921.8"/><polygon points="45.5,850.1 51.6,851.1 50.8,853.3 44.7,852.3"/><polygon points="136.3,915.1 141.1,917.0 139.6,921.3 134.9,919.4"/><polygon points="30.5,739.3 35.7,740.4 34.9,742.8 29.7,741.7"/><polygon points="6.6,880.5 10.7,882.3 9.3,886.5 5.2,884.6"/><polygon points="71.2,773.7 76.5,775.2 75.4,778.6 70.1,777.1"/><polygon points="86.5,804.4 92.9,805.8 91.8,809.1 85.5,807.6"/><polygon points="66.7,835.2 70.5,836.4 69.6,839.2 65.8,838.0"/><polygon points="64.2,792.1 67.3,793.6 66.1,797.1 63.1,795.5"/><polygon points="97.1,757.2 102.5,758.5 101.5,761.3 96.1,760.1"/><polygon points="109.4,840.6 112.4,841.6 111.7,843.9 108.6,842.9"/><polygon points="104.6,909.8 108.5,911.2 107.4,914.3 103.6,912.9"/><polygon points="56.3,710.0 60.6,711.5 59.5,714.9 55.2,713.4"/><polygon points="46.5,729.8 52.2,730.8 51.5,733.0 45.7,732.0"/><polygon points="88.1,839.7 92.2,840.9 91.3,843.5 87.2,842.4"/><polygon points="29.0,747.6 34.5,748.7 33.7,751.0 28.2,750.0"/><polygon points="49.8,716.5 55.8,717.8 54.7,720.9 48.8,719.6"/><polygon points="52.1,813.7 58.2,815.0 57.2,818.1 51.1,816.8"/><polygon points="34.8,651.1 39.7,652.3 38.8,654.8 34.0,653.7"/><polygon points="124.8,871.5 128.5,872.7 127.5,875.4 123.9,874.2"/><polygon points="124.9,811.1 130.7,812.4 129.8,815.3 123.9,814.0"/><polygon points="20.1,703.6 25.9,704.9 25.0,707.6 19.2,706.4"/><polygon points="53.6,742.0 58.1,743.4 57.1,746.4 52.6,745.0"/><polygon points="0.7,903.6 6.8,905.5 5.4,909.8 -0.7,907.9"/><polygon points="67.2,905.7 73.5,906.9 72.6,909.5 66.3,908.4"/><polygon points="115.3,870.9 120.7,872.4 119.6,875.6 114.3,874.2"/><polygon points="44.7,718.7 48.5,719.7 47.7,722.0 44.0,721.0"/><polygon points="139.8,827.0 146.1,828.8 144.7,832.9 138.4,831.1"/><polygon points="2.0,842.8 5.6,844.1 4.7,846.9 1.1,845.6"/><polygon points="102.6,775.2 107.0,777.0 105.6,781.2 101.2,779.3"/><polygon points="94.7,718.8 98.6,720.6 97.3,724.6 93.4,722.8"/><polygon points="73.8,854.2 78.1,855.4 77.2,857.9 73.0,856.8"/><polygon points="82.7,864.8 86.3,866.5 85.0,870.3 81.4,868.6"/><polygon points="142.6,861.5 148.5,862.5 147.8,864.6 141.9,863.7"/><polygon points="97.3,878.8 100.4,880.1 99.5,882.8 96.3,881.6"/><polygon points="41.6,775.9 46.0,777.3 45.0,780.5 40.5,779.1"/><polygon points="8.5,653.0 11.9,654.0 11.1,656.3 7.7,655.2"/><polygon points="150.8,876.4 154.1,877.8 153.0,881.0 149.7,879.6"/><polygon points="48.9,710.6 53.1,712.2 51.9,715.7 47.7,714.1"/><polygon points="90.8,724.8 94.4,726.1 93.5,728.9 89.8,727.6"/><polygon points="19.1,784.6 24.7,785.9 23.7,788.8 18.2,787.5"/><polygon points="12.4,668.8 16.7,670.4 15.5,673.8 11.2,672.3"/><polygon points="124.0,805.3 128.5,806.6 127.5,809.5 123.0,808.2"/><polygon points="76.8,829.8 81.2,831.4 80.0,835.1 75.6,833.4"/><polygon points="71.3,689.3 76.2,690.9 75.0,694.5 70.1,692.9"/><polygon points="11.1,744.5 15.6,746.3 14.2,750.3 9.7,748.5"/><polygon points="138.9,856.9 142.8,858.2 141.8,861.4 137.9,860.0"/><polygon points="19.1,863.7 24.4,865.5 23.0,869.5 17.7,867.7"/><polygon points="122.6,819.0 128.2,820.5 127.1,823.8 121.5,822.3"/><polygon points="16.0,794.5 18.9,795.6 18.1,798.0 15.1,796.9"/><polygon points="14.2,644.5 20.3,645.6 19.5,648.1 13.4,647.0"/><polygon points="3.6,872.4 7.0,874.2 5.7,878.1 2.3,876.3"/><polygon points="104.2,870.8 110.6,872.3 109.5,875.6 103.1,874.1"/><polygon points="118.7,771.0 124.3,772.1 123.5,774.4 117.9,773.4"/><polygon points="115.9,901.0 119.1,902.2 118.1,905.1 114.9,903.8"/><polygon points="87.3,868.3 91.1,869.4 90.3,871.9 86.4,870.8"/><polygon points="38.7,803.1 44.3,804.5 43.3,807.5 37.7,806.1"/><polygon points="56.9,735.8 61.1,737.1 60.1,740.2 55.8,738.8"/><polygon points="12.9,767.6 19.3,769.0 18.3,772.0 11.9,770.6"/><polygon points="106.9,846.2 112.3,847.6 111.2,850.9 105.8,849.4"/><polygon points="74.8,811.4 81.0,812.5 80.2,815.0 74.0,813.9"/><polygon points="14.8,843.7 21.1,845.2 20.0,848.4 13.7,847.0"/><polygon points="68.5,834.7 72.2,835.9 71.3,838.7 67.6,837.5"/><polygon points="30.8,793.8 34.9,795.0 34.0,797.6 29.9,796.5"/><polygon points="106.9,906.8 111.0,908.4 109.7,912.0 105.7,910.4"/><polygon points="63.9,876.1 69.0,877.3 68.1,880.0 63.0,878.8"/><polygon points="33.7,621.1 38.4,622.4 37.4,625.4 32.7,624.1"/><polygon points="26.6,724.7 30.8,726.4 29.5,730.2 25.4,728.5"/><polygon points="22.2,918.4 26.9,919.9 25.8,923.3 21.1,921.8"/><polygon points="72.4,870.3 78.3,871.8 77.2,875.1 71.3,873.6"/><polygon points="74.5,835.3 80.5,836.6 79.5,839.6 73.5,838.3"/><polygon points="113.5,908.8 118.1,910.0 117.3,912.7 112.6,911.5"/><polygon points="36.3,834.4 41.7,836.2 40.3,840.4 34.9,838.6"/><polygon points="29.3,693.4 33.0,695.0 31.8,698.7 28.1,697.1"/><polygon points="132.8,890.3 136.7,892.0 135.4,896.0 131.5,894.3"/><polygon points="48.5,744.0 54.1,745.0 53.3,747.3 47.7,746.3"/><polygon points="14.3,870.1 18.4,871.4 17.4,874.3 13.4,873.0"/><polygon points="89.8,821.4 92.8,822.7 91.8,825.5 88.8,824.3"/><polygon points="67.5,763.2 71.2,764.7 70.1,768.1 66.4,766.6"/><polygon points="42.5,818.3 45.9,820.1 44.5,824.2 41.2,822.4"/><polygon points="119.5,846.5 123.5,848.1 122.3,851.7 118.3,850.1"/><polygon points="101.2,861.5 105.1,863.2 103.9,866.9 99.9,865.3"/><polygon points="148.7,820.6 153.6,821.7 152.8,824.0 147.9,823.0"/><polygon points="76.4,722.1 82.0,723.7 80.8,727.3 75.2,725.7"/><polygon points="99.9,807.7 103.5,809.5 102.2,813.6 98.5,811.8"/><polygon points="51.3,835.2 56.4,836.7 55.3,840.0 50.2,838.6"/><polygon points="100.2,754.5 104.3,755.7 103.4,758.2 99.3,757.1"/><polygon points="10.6,833.8 16.3,835.3 15.2,838.6 9.5,837.1"/><polygon points="41.1,731.7 47.2,732.7 46.5,734.9 40.4,733.9"/><polygon points="78.1,689.9 83.8,691.2 82.8,694.1 77.1,692.8"/><polygon points="51.5,737.8 56.4,739.5 55.1,743.3 50.2,741.6"/><polygon points="54.6,874.0 58.0,875.2 57.1,878.0 53.7,876.8"/><polygon points="15.4,648.6 21.2,650.2 19.9,653.9 14.2,652.3"/><polygon points="28.6,672.1 33.1,673.7 31.8,677.5 27.4,675.8"/><polygon points="126.2,843.9 131.3,845.0 130.5,847.4 125.4,846.3"/><polygon points="61.6,673.5 66.5,675.0 65.4,678.3 60.5,676.8"/><polygon points="31.3,690.8 37.0,691.8 36.3,694.0 30.5,693.0"/><polygon points="124.3,887.6 130.6,889.0 129.6,891.9 123.3,890.6"/><polygon points="85.5,793.0 90.7,794.9 89.3,799.1 84.1,797.3"/><polygon points="93.0,837.2 96.0,838.9 94.8,842.7 91.8,841.0"/><polygon points="102.4,765.0 107.3,766.4 106.2,769.5 101.4,768.2"/><polygon points="29.9,776.6 33.0,778.0 32.0,781.2 28.9,779.8"/><polygon points="99.9,750.4 104.9,752.3 103.5,756.5 98.5,754.6"/><polygon points="122.6,805.4 125.7,806.7 124.8,809.6 121.6,808.3"/><polygon points="36.1,637.9 41.0,639.7 39.6,643.9 34.7,642.0"/><polygon points="50.0,881.3 55.4,882.4 54.6,884.8 49.2,883.7"/><polygon points="132.8,798.6 139.1,800.2 137.9,803.9 131.6,802.3"/><polygon points="124.8,900.1 130.9,901.5 129.8,904.5 123.8,903.2"/><polygon points="117.1,762.9 120.5,763.9 119.7,766.1 116.4,765.2"/><polygon points="12.1,675.5 15.6,676.9 14.5,680.1 11.0,678.7"/><polygon points="108.2,779.0 112.7,780.6 111.5,784.1 107.0,782.6"/><polygon points="47.1,756.6 52.8,757.9 51.8,760.9 46.1,759.6"/><polygon points="27.9,890.2 33.5,891.5 32.5,894.4 27.0,893.1"/><polygon points="57.4,776.5 62.5,777.7 61.6,780.3 56.5,779.2"/><polygon points="0.4,678.2 6.2,679.3 5.4,681.7 -0.4,680.6"/><polygon points="32.4,666.4 36.8,667.5 36.0,670.0 31.5,668.9"/><polygon points="4.3,647.8 7.8,649.2 6.8,652.4 3.2,651.0"/><polygon points="9.2,620.9 13.8,622.2 12.8,625.2 8.2,623.9"/><polygon points="62.4,735.8 65.5,737.7 64.1,741.9 61.0,740.0"/><polygon points="33.9,642.9 38.5,644.1 37.7,646.6 33.0,645.4"/><polygon points="96.3,720.4 99.7,721.4 99.0,723.6 95.6,722.6"/><polygon points="38.7,695.6 44.6,697.2 43.4,700.7 37.5,699.1"/><polygon points="105.6,911.6 110.7,912.6 110.0,914.7 104.9,913.8"/><polygon points="4.7,641.8 8.3,642.8 7.5,645.0 3.9,644.0"/><polygon points="8.3,814.9 14.5,816.1 13.7,818.6 7.5,817.5"/><polygon points="124.3,895.7 130.7,896.7 129.9,898.9 123.6,897.9"/><polygon points="47.1,800.4 53.5,801.4 52.7,803.7 46.4,802.7"/><polygon points="45.4,875.0 48.8,876.3 47.8,879.3 44.4,877.9"/><polygon points="51.7,822.8 58.0,823.9 57.2,826.4 50.9,825.3"/><polygon points="114.5,839.4 120.4,840.8 119.3,844.2 113.3,842.7"/><polygon points="64.2,684.4 69.9,685.8 68.9,689.0 63.1,687.6"/><polygon points="41.7,666.1 47.2,667.6 46.1,671.1 40.5,669.6"/><polygon points="72.2,846.9 77.6,847.9 76.9,850.3 71.5,849.2"/><polygon points="36.7,873.0 42.0,874.8 40.6,878.9 35.4,877.1"/><polygon points="138.8,839.0 142.9,840.3 142.0,843.3 137.8,842.0"/><polygon points="11.1,736.6 17.5,737.7 16.7,740.0 10.4,739.0"/><polygon points="12.5,813.3 16.3,814.3 15.6,816.6 11.8,815.6"/><polygon points="23.6,811.9 28.7,812.9 28.0,815.0 22.9,814.1"/><polygon points="35.6,911.0 39.3,912.5 38.2,915.8 34.5,914.3"/><polygon points="64.9,853.9 70.1,855.6 68.8,859.4 63.6,857.7"/><polygon points="27.5,638.3 33.4,639.4 32.6,641.7 26.7,640.7"/><polygon points="3.7,910.7 7.4,912.5 6.0,916.6 2.4,914.8"/><polygon points="13.3,756.9 17.0,758.6 15.7,762.5 12.0,760.8"/><polygon points="95.2,811.1 100.9,812.8 99.6,816.9 93.9,815.1"/><polygon points="53.5,799.2 58.1,800.2 57.3,802.6 52.7,801.6"/><polygon points="129.2,796.5 135.1,797.7 134.3,800.2 128.4,799.1"/><polygon points="83.4,756.5 89.0,757.6 88.2,759.9 82.7,758.8"/><polygon points="53.6,762.8 56.8,764.3 55.7,767.6 52.4,766.1"/><polygon points="100.3,800.0 104.1,801.3 103.1,804.2 99.4,802.9"/><polygon points="33.7,664.8 40.0,666.4 38.8,670.1 32.5,668.4"/><polygon points="135.3,916.9 140.5,918.8 139.1,922.9 134.0,921.1"/><polygon points="82.9,742.6 89.2,744.4 87.9,748.5 81.5,746.7"/><polygon points="154.3,896.6 158.3,898.4 156.9,902.6 152.9,900.7"/><polygon points="28.6,643.4 34.1,644.7 33.2,647.4 27.6,646.2"/><polygon points="80.4,810.3 83.5,811.9 82.2,815.7 79.1,814.0"/><polygon points="42.7,746.8 46.9,748.4 45.7,752.2 41.5,750.5"/><polygon points="16.0,705.9 20.4,706.9 19.7,709.2 15.2,708.2"/><polygon points="23.7,848.2 29.2,850.1 27.8,854.3 22.3,852.4"/><polygon points="151.6,883.0 155.9,884.1 155.0,886.6 150.7,885.5"/><polygon points="48.3,756.2 53.1,757.7 52.0,761.0 47.2,759.5"/><polygon points="55.7,875.8 59.6,877.2 58.6,880.3 54.6,879.0"/><polygon points="137.2,861.8 141.2,863.0 140.4,865.7 136.3,864.5"/><polygon points="20.3,777.0 25.2,778.1 24.4,780.6 19.5,779.5"/><polygon points="7.8,676.6 13.5,678.0 12.5,681.2 6.7,679.8"/><polygon points="151.5,855.2 158.0,856.2 157.2,858.4 150.8,857.4"/><polygon points="28.6,618.0 33.1,619.3 32.2,622.2 27.7,620.9"/><polygon points="7.9,781.7 11.2,782.9 10.3,785.7 7.0,784.5"/><polygon points="38.3,860.3 42.7,861.5 41.8,864.2 37.4,863.0"/><polygon points="6.8,745.9 12.0,747.5 10.8,751.1 5.6,749.5"/><polygon points="141.2,862.3 145.0,863.4 144.2,865.8 140.4,864.7"/><polygon points="117.3,856.4 122.1,858.2 120.8,862.1 116.0,860.3"/><polygon points="26.1,619.2 31.4,621.0 30.0,625.1 24.8,623.3"/><polygon points="103.0,899.1 108.8,900.7 107.7,904.1 101.8,902.6"/><polygon points="64.1,773.2 67.7,774.3 66.9,776.8 63.3,775.7"/><polygon points="105.8,918.6 110.7,920.0 109.7,923.0 104.8,921.6"/><polygon points="54.4,753.7 60.3,755.1 59.2,758.2 53.4,756.8"/><polygon points="48.7,774.3 53.2,776.0 51.8,780.0 47.4,778.2"/><polygon points="128.0,900.0 133.2,900.9 132.5,903.2 127.3,902.2"/><polygon points="88.9,782.8 93.6,784.0 92.7,786.8 88.0,785.5"/><polygon points="109.8,893.9 113.1,895.5 111.9,899.1 108.6,897.5"/><polygon points="57.4,772.1 63.6,773.9 62.2,778.1 56.0,776.3"/><polygon points="59.3,868.3 63.4,869.5 62.5,872.2 58.4,871.0"/><polygon points="147.0,903.8 151.1,905.1 150.1,908.1 146.0,906.8"/><polygon points="43.6,654.4 47.5,656.3 46.1,660.5 42.2,658.6"/><polygon points="12.3,684.5 16.0,685.6 15.2,687.9 11.5,686.9"/><polygon points="81.4,842.1 87.4,843.7 86.2,847.2 80.3,845.6"/><polygon points="43.7,909.1 46.9,910.3 46.0,913.1 42.8,911.8"/><polygon points="74.7,696.2 79.6,697.2 78.9,699.5 74.0,698.5"/><polygon points="36.5,908.0 40.0,909.8 38.6,913.9 35.1,912.1"/><polygon points="27.5,918.8 32.9,920.4 31.7,923.9 26.3,922.4"/><polygon points="22.0,630.8 27.7,631.9 26.8,634.4 21.2,633.3"/><polygon points="29.3,866.6 35.4,867.6 34.7,869.9 28.6,868.9"/><polygon points="60.3,917.2 64.3,918.3 63.5,920.7 59.5,919.6"/><polygon points="22.5,653.0 26.7,654.8 25.3,658.9 21.1,657.1"/><polygon points="11.9,672.9 18.2,674.8 16.8,679.1 10.5,677.2"/><polygon points="54.8,906.0 59.5,907.6 58.3,911.2 53.6,909.6"/><polygon points="53.4,843.7 59.2,845.2 58.1,848.6 52.3,847.1"/><polygon points="71.8,779.2 76.4,780.7 75.3,784.0 70.7,782.5"/><polygon points="91.9,900.4 98.0,901.5 97.1,904.1 91.1,902.9"/><polygon points="149.1,871.9 152.6,873.1 151.7,875.9 148.2,874.6"/><polygon points="31.3,630.3 37.8,631.6 36.8,634.7 30.3,633.3"/><polygon points="2.2,881.1 8.0,883.0 6.5,887.2 0.7,885.3"/><polygon points="106.1,775.3 111.8,776.3 111.0,778.7 105.3,777.6"/><polygon points="83.6,749.5 87.1,751.0 86.0,754.4 82.5,752.9"/><polygon points="50.0,769.5 54.3,770.7 53.4,773.6 49.1,772.3"/><polygon points="55.5,798.5 61.9,800.4 60.5,804.5 54.1,802.7"/><polygon points="133.4,870.5 137.4,872.3 136.0,876.6 132.0,874.7"/><polygon points="41.7,651.8 46.5,653.5 45.3,657.2 40.5,655.5"/><polygon points="52.8,812.1 56.7,814.0 55.3,818.2 51.4,816.3"/><polygon points="70.1,760.7 74.9,762.5 73.6,766.5 68.7,764.7"/><polygon points="68.3,803.7 71.5,805.1 70.5,808.1 67.3,806.8"/><polygon points="131.1,852.7 134.3,854.5 133.0,858.4 129.8,856.7"/><polygon points="59.4,915.3 63.7,916.5 62.8,919.1 58.5,917.9"/><polygon points="84.9,885.4 89.4,887.2 88.1,891.2 83.6,889.4"/><polygon points="46.5,769.2 50.9,770.5 49.9,773.4 45.5,772.1"/><polygon points="100.8,882.7 105.9,883.8 105.1,886.3 100.0,885.2"/><polygon points="34.0,727.9 39.2,729.0 38.4,731.4 33.2,730.3"/><polygon points="12.6,712.5 16.6,713.4 15.9,715.6 11.9,714.7"/><polygon points="83.4,896.9 88.2,898.5 87.0,902.3 82.1,900.6"/><polygon points="128.2,871.2 134.4,872.6 133.4,875.7 127.1,874.3"/><polygon points="73.5,887.4 77.5,888.5 76.7,891.0 72.7,889.9"/><polygon points="127.4,797.9 130.7,798.9 130.0,801.1 126.7,800.1"/><polygon points="42.4,733.4 47.2,734.7 46.2,737.8 41.4,736.4"/><polygon points="97.3,816.6 101.8,817.7 101.0,820.0 96.5,819.0"/><polygon points="151.5,826.2 154.8,827.6 153.7,830.7 150.5,829.3"/><polygon points="627.2,661.6 648.0,664.6 639.1,719.6 627.2,718.1"/><polygon points="649.5,663.1 662.9,664.6 656.9,686.9 649.5,685.4"/><polygon points="668.8,685.4 677.8,686.9 674.8,706.2 667.3,704.7"/><polygon points="701.6,670.5 713.5,672.0 712.0,680.9 700.1,679.5"/><polygon points="707.5,697.3 719.4,700.3 717.9,707.7 706.0,704.7"/><polygon points="671.8,724.1 683.7,725.6 677.8,747.9 670.3,746.4"/><polygon points="671.8,750.9 680.7,752.4 677.8,765.7 670.3,764.3"/><polygon points="692.6,741.9 701.6,743.4 700.1,753.8 691.1,752.4"/><polygon points="758.1,741.9 768.5,743.4 765.5,753.8 756.6,752.4"/><polygon points="773.0,750.9 784.9,752.4 783.4,765.7 771.5,764.3"/><polygon points="764.0,667.6 774.5,669.0 773.0,676.5 762.5,675.0"/><polygon points="787.8,715.2 814.0,718.1 814.0,724.1 787.8,721.1"/><polygon points="517.1,829.7 529.0,831.2 520.1,875.8 509.6,874.3"/><polygon points="526.0,893.7 543.9,893.7 546.8,921.1 523.0,921.1"/><polygon points="773.0,628.9 781.9,630.4 780.4,637.8 773.0,636.3"/><polygon points="628.7,731.5 640.6,733.0 639.1,736.0 628.7,736.0"/><polygon points="1105.6,614.0 1135.3,614.0 1126.4,667.6 1105.6,666.1"/><polygon points="1129.4,667.6 1171.0,672.0 1169.5,680.9 1129.4,678.0"/><polygon points="1163.6,614.0 1180.0,614.0 1168.1,706.2 1159.1,706.2"/><polygon points="1126.4,682.4 1153.2,685.4 1151.7,692.8 1126.4,689.9"/><polygon points="1124.9,694.3 1141.3,695.8 1141.3,701.8 1124.9,700.3"/><polygon points="1111.5,669.0 1124.9,670.5 1123.4,679.5 1111.5,678.0"/><polygon points="878.0,682.4 895.8,683.9 894.3,697.3 876.5,695.8"/><polygon points="1001.4,866.9 1022.3,868.4 1019.3,899.6 998.5,898.1"/><polygon points="1117.5,792.5 1129.4,786.6 1141.3,797.0 1129.4,808.9"/><polygon points="827.4,630.4 836.3,630.4 836.3,639.3 827.4,639.3"/><polygon points="1181.3,824.4 1185.6,822.3 1187.3,826.1 1182.9,828.6"/><polygon points="1138.5,834.8 1143.0,833.2 1144.2,836.1 1139.8,838.0"/><polygon points="1171.7,894.7 1176.3,892.9 1177.7,896.1 1173.1,898.2"/><polygon points="1189.1,913.1 1195.3,911.1 1196.9,914.7 1190.7,917.0"/><polygon points="1219.0,775.8 1226.2,774.0 1227.7,777.3 1220.5,779.5"/><polygon points="1161.8,893.0 1166.6,890.9 1168.3,894.8 1163.5,897.4"/><polygon points="1190.1,825.4 1196.2,823.9 1197.5,826.7 1191.3,828.6"/><polygon points="1193.6,833.9 1198.9,831.7 1200.7,835.6 1195.4,838.2"/><polygon points="1174.2,814.4 1181.2,812.1 1183.0,816.2 1176.0,819.0"/><polygon points="1156.2,856.2 1162.3,853.7 1164.3,858.2 1158.3,861.3"/><polygon points="1197.8,812.6 1205.5,811.0 1206.8,813.9 1199.1,815.8"/><polygon points="1171.2,884.1 1175.9,882.0 1177.5,885.7 1172.8,888.2"/><polygon points="1138.7,870.5 1145.6,868.3 1147.3,872.2 1140.4,874.8"/><polygon points="1210.4,816.5 1217.0,814.3 1218.8,818.3 1212.1,820.9"/><polygon points="1185.0,838.2 1192.2,835.6 1194.3,840.3 1187.1,843.4"/><polygon points="1176.0,869.9 1180.3,867.6 1182.2,871.7 1177.8,874.5"/><polygon points="1190.8,920.0 1197.9,918.2 1199.3,921.5 1192.2,923.7"/><polygon points="1168.4,870.6 1172.6,868.5 1174.3,872.2 1170.0,874.6"/><polygon points="1140.4,885.7 1145.0,884.0 1146.4,887.2 1141.8,889.3"/><polygon points="1168.8,901.5 1173.3,899.4 1174.9,903.1 1170.5,905.5"/><polygon points="1182.4,903.3 1189.5,900.8 1191.5,905.3 1184.4,908.3"/><polygon points="1159.2,832.0 1164.6,829.4 1166.7,834.0 1161.2,837.1"/><polygon points="1217.4,791.7 1222.2,789.9 1223.6,793.1 1218.8,795.2"/><polygon points="1155.3,842.6 1161.6,840.8 1163.0,844.0 1156.8,846.2"/><polygon points="1135.7,832.5 1141.2,830.4 1142.9,834.3 1137.4,836.9"/><polygon points="1217.0,873.9 1223.0,871.7 1224.8,875.7 1218.8,878.3"/><polygon points="1212.4,887.5 1219.7,885.1 1221.7,889.5 1214.4,892.4"/><polygon points="1169.0,829.5 1173.5,827.3 1175.3,831.3 1170.7,834.0"/><polygon points="1144.0,824.1 1148.3,821.6 1150.3,826.1 1146.0,829.2"/><polygon points="1188.0,791.3 1193.0,789.4 1194.5,792.9 1189.5,795.1"/><polygon points="1208.1,920.0 1213.9,917.9 1215.6,921.7 1209.7,924.1"/><polygon points="1164.7,809.0 1171.8,807.4 1173.2,810.4 1166.0,812.4"/><polygon points="1137.3,913.6 1143.4,911.9 1144.7,914.9 1138.6,916.9"/><polygon points="1180.6,917.8 1187.8,915.5 1189.7,919.6 1182.4,922.4"/><polygon points="1157.7,824.6 1162.5,822.2 1164.4,826.5 1159.6,829.4"/><polygon points="1181.0,887.4 1186.3,885.6 1187.7,888.8 1182.4,890.9"/><polygon points="1204.9,918.8 1212.1,916.3 1214.0,920.7 1206.8,923.6"/><polygon points="1205.5,881.4 1210.4,879.3 1212.1,883.1 1207.1,885.6"/><polygon points="1137.7,811.3 1142.8,809.0 1144.7,813.1 1139.6,815.9"/><polygon points="1217.3,836.8 1224.8,834.2 1226.9,839.0 1219.4,842.2"/><polygon points="1217.2,824.3 1222.1,822.5 1223.5,825.7 1218.6,827.8"/><polygon points="1152.2,799.8 1158.6,797.3 1160.6,801.9 1154.2,805.0"/><polygon points="1207.3,841.8 1213.8,839.3 1215.8,843.7 1209.3,846.6"/><polygon points="1142.6,869.3 1150.0,866.9 1151.9,871.3 1144.5,874.2"/><polygon points="1199.6,841.5 1204.4,839.1 1206.4,843.5 1201.6,846.4"/><polygon points="1163.8,890.7 1171.5,888.8 1173.0,892.3 1165.4,894.6"/></g>
<g fill="#e3e0d7"><circle cx="168.1" cy="62.5" r="4.2"/><circle cx="181.5" cy="119.0" r="4.5"/><circle cx="194.9" cy="132.4" r="5.4"/><circle cx="206.8" cy="144.3" r="5.4"/><circle cx="218.7" cy="156.2" r="5.1"/><circle cx="229.1" cy="168.1" r="5.1"/><circle cx="240.4" cy="180.0" r="5.4"/><circle cx="351.1" cy="123.5" r="14.3"/><circle cx="401.7" cy="132.4" r="9.5"/><circle cx="302.0" cy="175.5" r="5.4"/><circle cx="322.8" cy="182.1" r="4.2"/><circle cx="327.3" cy="209.8" r="5.1"/><circle cx="306.5" cy="222.6" r="4.5"/><circle cx="324.3" cy="227.6" r="5.1"/><circle cx="327.3" cy="254.4" r="3.0"/><circle cx="147.3" cy="3.6" r="2.7"/><circle cx="166.6" cy="32.7" r="2.4"/><circle cx="188.1" cy="31.3" r="3.3"/><circle cx="180.6" cy="38.8" r="2.7"/><circle cx="194.8" cy="38.8" r="2.7"/><circle cx="188.8" cy="44.8" r="2.7"/><circle cx="147.0" cy="83.6" r="2.7"/><circle cx="163.4" cy="53.0" r="1.2"/><circle cx="124.6" cy="27.6" r="1.2"/><circle cx="491.2" cy="23.8" r="14.0"/><circle cx="549.8" cy="34.2" r="14.0"/><circle cx="615.3" cy="44.6" r="14.0"/><circle cx="667.3" cy="8.9" r="13.4"/><circle cx="761.1" cy="23.8" r="12.5"/><circle cx="415.9" cy="78.8" r="12.5"/><circle cx="481.4" cy="89.3" r="14.3"/><circle cx="542.4" cy="99.7" r="14.3"/><circle cx="603.4" cy="102.6" r="13.4"/><circle cx="407.0" cy="133.9" r="14.3"/><circle cx="473.1" cy="143.7" r="14.0"/><circle cx="532.9" cy="153.8" r="14.3"/><circle cx="594.4" cy="164.5" r="14.0"/><circle cx="430.8" cy="196.4" r="5.1"/><circle cx="456.1" cy="199.3" r="4.2"/><circle cx="465.0" cy="201.7" r="4.2"/><circle cx="473.9" cy="203.2" r="4.2"/><circle cx="482.9" cy="204.7" r="4.2"/><circle cx="490.3" cy="206.2" r="3.6"/><circle cx="497.7" cy="207.7" r="3.6"/><circle cx="427.8" cy="208.3" r="4.2"/><circle cx="567.7" cy="223.1" r="7.4"/><circle cx="563.2" cy="244.0" r="7.4"/><circle cx="629.6" cy="241.6" r="7.4"/><circle cx="671.2" cy="261.8" r="14.0"/><circle cx="741.7" cy="255.9" r="7.1"/><circle cx="769.4" cy="260.3" r="7.1"/><circle cx="796.8" cy="265.7" r="6.5"/><circle cx="738.7" cy="294.6" r="11.3"/><circle cx="781.9" cy="299.0" r="11.9"/><circle cx="420.4" cy="247.0" r="4.5"/><circle cx="415.9" cy="266.3" r="8.0"/><circle cx="415.9" cy="294.6" r="8.9"/><circle cx="442.7" cy="300.5" r="7.4"/><circle cx="463.5" cy="263.3" r="5.1"/><circle cx="487.3" cy="264.8" r="3.0"/><circle cx="465.0" cy="249.9" r="3.6"/><circle cx="475.4" cy="252.3" r="3.0"/><circle cx="482.9" cy="252.9" r="3.0"/><circle cx="490.3" cy="254.4" r="3.0"/><circle cx="442.7" cy="273.7" r="3.6"/><circle cx="453.1" cy="276.7" r="3.6"/><circle cx="463.5" cy="278.2" r="3.6"/><circle cx="473.9" cy="279.7" r="3.6"/><circle cx="453.1" cy="291.6" r="3.6"/><circle cx="462.0" cy="293.1" r="3.6"/><circle cx="469.5" cy="241.0" r="3.0"/><circle cx="521.5" cy="246.4" r="2.4"/><circle cx="529.0" cy="247.5" r="2.4"/><circle cx="536.4" cy="248.7" r="2.4"/><circle cx="430.8" cy="229.1" r="3.0"/><circle cx="892.8" cy="84.8" r="5.1"/><circle cx="875.0" cy="95.2" r="4.8"/><circle cx="904.2" cy="103.2" r="5.4"/><circle cx="853.3" cy="112.2" r="6.5"/><circle cx="884.8" cy="113.7" r="5.1"/><circle cx="910.7" cy="128.8" r="6.8"/><circle cx="921.7" cy="147.9" r="6.0"/><circle cx="878.6" cy="154.1" r="9.5"/><circle cx="924.1" cy="187.4" r="11.9"/><circle cx="870.5" cy="299.0" r="8.9"/><circle cx="1221.0" cy="282.7" r="6.5"/><circle cx="349.6" cy="341.2" r="10.4"/><circle cx="382.3" cy="344.2" r="6.5"/><circle cx="368.9" cy="353.1" r="6.5"/><circle cx="395.7" cy="342.7" r="3.6"/><circle cx="389.8" cy="354.6" r="5.4"/><circle cx="403.2" cy="350.1" r="4.5"/><circle cx="363.0" cy="376.9" r="5.4"/><circle cx="374.9" cy="378.4" r="5.4"/><circle cx="386.8" cy="381.4" r="5.4"/><circle cx="400.2" cy="382.9" r="4.5"/><circle cx="352.6" cy="387.3" r="8.3"/><circle cx="383.8" cy="396.3" r="5.4"/><circle cx="398.7" cy="393.3" r="3.6"/><circle cx="358.5" cy="405.2" r="6.0"/><circle cx="357.0" cy="424.5" r="5.1"/><circle cx="368.9" cy="426.0" r="4.2"/><circle cx="382.3" cy="427.5" r="3.6"/><circle cx="392.7" cy="428.4" r="3.0"/><circle cx="400.2" cy="429.0" r="3.0"/><circle cx="270.8" cy="487.0" r="6.0"/><circle cx="296.0" cy="484.9" r="6.0"/><circle cx="348.1" cy="466.2" r="3.6"/><circle cx="373.4" cy="478.1" r="8.9"/><circle cx="395.7" cy="476.6" r="6.0"/><circle cx="392.7" cy="491.5" r="6.0"/><circle cx="370.4" cy="500.4" r="9.5"/><circle cx="391.3" cy="506.3" r="6.0"/><circle cx="383.8" cy="519.7" r="4.5"/><circle cx="388.3" cy="545.0" r="4.5"/><circle cx="404.6" cy="533.1" r="4.5"/><circle cx="162.2" cy="493.0" r="6.0"/><circle cx="192.8" cy="509.3" r="7.4"/><circle cx="209.8" cy="493.0" r="3.6"/><circle cx="159.2" cy="559.9" r="13.4"/><circle cx="117.5" cy="583.7" r="8.9"/><circle cx="226.1" cy="601.6" r="9.8"/><circle cx="321.3" cy="603.0" r="8.9"/><circle cx="41.7" cy="409.6" r="4.5"/><circle cx="2.4" cy="375.4" r="6.0"/><circle cx="142.8" cy="607.5" r="7.4"/><circle cx="543.9" cy="313.0" r="8.9"/><circle cx="606.9" cy="313.0" r="14.0"/><circle cx="661.4" cy="319.5" r="13.4"/><circle cx="731.9" cy="336.8" r="10.4"/><circle cx="774.5" cy="344.2" r="10.4"/><circle cx="780.4" cy="307.0" r="7.4"/><circle cx="442.7" cy="307.0" r="7.4"/><circle cx="478.4" cy="314.4" r="3.0"/><circle cx="414.4" cy="345.7" r="3.6"/><circle cx="424.9" cy="347.2" r="4.2"/><circle cx="433.8" cy="348.7" r="3.6"/><circle cx="418.9" cy="360.6" r="5.1"/><circle cx="430.2" cy="361.4" r="4.5"/><circle cx="411.5" cy="382.9" r="4.5"/><circle cx="424.9" cy="387.3" r="5.1"/><circle cx="471.0" cy="357.6" r="6.8"/><circle cx="491.8" cy="361.4" r="6.8"/><circle cx="540.9" cy="373.9" r="6.5"/><circle cx="573.6" cy="387.3" r="8.9"/><circle cx="609.3" cy="393.3" r="8.9"/><circle cx="484.4" cy="417.1" r="6.5"/><circle cx="529.9" cy="440.3" r="9.5"/><circle cx="573.6" cy="442.4" r="11.0"/><circle cx="616.2" cy="450.4" r="11.0"/><circle cx="454.6" cy="442.4" r="5.1"/><circle cx="469.5" cy="445.4" r="4.5"/><circle cx="482.9" cy="448.3" r="3.6"/><circle cx="768.5" cy="416.5" r="7.4"/><circle cx="762.5" cy="448.9" r="8.0"/><circle cx="756.6" cy="480.5" r="8.0"/><circle cx="706.9" cy="402.2" r="4.5"/><circle cx="729.8" cy="397.7" r="3.6"/><circle cx="720.9" cy="399.2" r="2.4"/><circle cx="516.5" cy="508.7" r="9.5"/><circle cx="551.3" cy="506.9" r="5.1"/><circle cx="579.6" cy="511.7" r="7.4"/><circle cx="413.5" cy="478.1" r="3.0"/><circle cx="412.4" cy="488.5" r="3.0"/><circle cx="410.0" cy="497.4" r="4.5"/><circle cx="408.5" cy="512.3" r="4.5"/><circle cx="410.0" cy="521.2" r="4.5"/><circle cx="505.2" cy="540.6" r="4.5"/><circle cx="930.0" cy="319.5" r="6.0"/><circle cx="864.6" cy="358.2" r="11.3"/><circle cx="825.3" cy="350.1" r="3.6"/><circle cx="822.9" cy="365.9" r="3.6"/><circle cx="912.2" cy="378.4" r="7.4"/><circle cx="828.3" cy="419.5" r="10.4"/><circle cx="861.6" cy="425.1" r="9.8"/><circle cx="1074.3" cy="407.6" r="19.9"/><circle cx="1152.3" cy="379.0" r="18.4"/><circle cx="1199.3" cy="437.9" r="18.4"/><circle cx="1130.9" cy="468.6" r="17.9"/><circle cx="1176.4" cy="540.0" r="8.3"/><circle cx="898.8" cy="579.2" r="14.9"/><circle cx="953.2" cy="589.7" r="14.3"/><circle cx="1007.4" cy="598.6" r="14.3"/><circle cx="1062.4" cy="606.0" r="14.3"/><circle cx="815.5" cy="458.7" r="3.6"/><circle cx="831.9" cy="458.7" r="2.4"/><circle cx="848.2" cy="458.1" r="3.0"/><circle cx="870.5" cy="307.0" r="6.0"/><circle cx="142.8" cy="615.5" r="7.4"/><circle cx="207.7" cy="660.7" r="12.8"/><circle cx="292.5" cy="628.0" r="8.3"/><circle cx="296.9" cy="674.4" r="10.4"/><circle cx="356.4" cy="685.4" r="14.9"/><circle cx="365.4" cy="633.3" r="17.0"/><circle cx="407.0" cy="694.3" r="6.5"/><circle cx="203.8" cy="737.5" r="9.8"/><circle cx="282.7" cy="753.8" r="11.9"/><circle cx="343.6" cy="761.9" r="14.0"/><circle cx="274.3" cy="805.9" r="14.3"/><circle cx="334.7" cy="813.3" r="12.8"/><circle cx="394.2" cy="822.3" r="12.8"/><circle cx="401.7" cy="771.7" r="8.3"/><circle cx="342.2" cy="865.4" r="6.5"/><circle cx="386.8" cy="872.9" r="14.0"/><circle cx="418.9" cy="695.8" r="13.4"/><circle cx="502.8" cy="707.7" r="13.4"/><circle cx="566.2" cy="718.1" r="14.0"/><circle cx="410.0" cy="771.7" r="8.9"/><circle cx="492.4" cy="791.6" r="11.0"/><circle cx="550.7" cy="800.0" r="13.4"/><circle cx="626.3" cy="799.4" r="9.8"/><circle cx="621.2" cy="829.7" r="8.9"/><circle cx="691.1" cy="825.2" r="14.0"/><circle cx="734.9" cy="823.8" r="8.9"/><circle cx="613.2" cy="877.3" r="8.3"/><circle cx="728.9" cy="883.3" r="17.0"/><circle cx="456.7" cy="892.2" r="9.5"/><circle cx="484.4" cy="889.2" r="9.5"/><circle cx="668.8" cy="914.5" r="17.0"/><circle cx="598.3" cy="916.0" r="7.4"/><circle cx="768.5" cy="921.1" r="11.9"/><circle cx="486.7" cy="624.4" r="2.4"/><circle cx="486.7" cy="634.2" r="3.0"/><circle cx="597.4" cy="661.6" r="3.6"/><circle cx="596.5" cy="671.4" r="3.6"/><circle cx="814.0" cy="846.1" r="6.5"/><circle cx="505.2" cy="625.9" r="1.5"/><circle cx="511.1" cy="627.1" r="1.5"/><circle cx="517.1" cy="628.0" r="1.5"/><circle cx="523.0" cy="628.9" r="1.5"/><circle cx="529.0" cy="629.5" r="1.5"/><circle cx="534.9" cy="630.4" r="1.5"/><circle cx="552.8" cy="862.4" r="2.4"/><circle cx="454.6" cy="816.3" r="2.4"/><circle cx="887.8" cy="650.3" r="13.4"/><circle cx="941.3" cy="659.5" r="14.9"/><circle cx="996.4" cy="668.4" r="13.4"/><circle cx="1051.1" cy="677.4" r="13.4"/><circle cx="875.0" cy="729.4" r="14.0"/><circle cx="929.4" cy="738.4" r="14.0"/><circle cx="984.2" cy="747.3" r="13.4"/><circle cx="1038.6" cy="756.8" r="13.4"/><circle cx="864.6" cy="797.9" r="12.5"/><circle cx="917.5" cy="807.4" r="13.4"/><circle cx="972.3" cy="816.3" r="13.4"/><circle cx="1028.2" cy="825.8" r="13.4"/><circle cx="851.2" cy="871.4" r="13.4"/><circle cx="905.6" cy="879.7" r="13.4"/><circle cx="959.8" cy="889.2" r="13.4"/></g>
<g fill="none" stroke-linejoin="round" stroke-linecap="round">
<g stroke="#cdc9c3" stroke-width="3.3"><polyline points="32.7,0.0 208.3,181.5 297.5,276.7 321.3,307.1"/><polyline points="232.1,0.0 232.1,22.3 50.6,196.4 0.0,248.4"/><polyline points="0.0,142.8 52.1,194.9 157.7,307.1"/><polyline points="208.3,183.0 95.2,307.1"/><polyline points="0.0,278.2 41.7,241.0 65.5,215.7 89.3,235.0"/><polyline points="0.0,175.5 11.9,148.8 26.8,145.8 35.7,160.7 35.7,172.6 0.0,208.3"/><polyline points="407.0,25.3 345.1,68.4 303.5,104.1 285.6,133.9 279.7,166.6 276.7,190.4"/><polyline points="374.9,168.1 407.0,174.1"/><polyline points="349.6,307.1 342.2,252.9 351.1,205.3 360.0,196.4 366.0,184.5 389.8,184.5 392.7,199.3"/><polyline points="377.9,232.1 336.2,307.1"/><polyline points="123.9,0.0 75.4,42.5 44.8,73.1 16.4,98.5 9.0,107.5 0.0,131.3"/><polyline points="79.1,0.0 98.5,19.4"/><polyline points="156.7,0.0 164.2,9.0 161.2,20.9 152.2,28.4 103.0,68.7"/><polyline points="119.4,56.7 131.3,55.2 147.8,37.3 146.3,32.8"/><polyline points="153.7,27.6 182.8,59.0"/><polyline points="44.8,73.1 73.1,104.5 99.3,135.1"/><polyline points="29.9,89.6 38.8,97.0 34.3,103.0 53.7,128.4 65.7,120.9 53.7,104.5 59.0,89.6"/><polyline points="0.0,149.3 6.0,146.3 17.9,145.5 29.9,154.0"/><polyline points="465.0,0.0 454.6,53.6 433.8,175.5 427.8,238.0 421.9,307.1"/><polyline points="407.0,10.4 436.8,0.0"/><polyline points="456.1,53.6 645.0,84.8"/><polyline points="645.0,84.8 648.0,68.4 665.9,50.6 743.2,0.0"/><polyline points="645.0,84.8 674.8,95.2 686.7,105.6 685.2,139.8 674.8,190.4 680.7,196.4 704.5,202.3 719.4,208.3 775.9,214.2 814.0,220.2"/><polyline points="590.0,0.0 578.1,71.4"/><polyline points="561.7,0.0 612.3,7.4 627.2,0.0"/><polyline points="645.0,84.8 636.1,130.9 625.7,208.3"/><polyline points="407.0,172.6 515.6,191.9 585.5,204.7 775.9,232.1 814.0,238.0"/><polyline points="515.6,191.9 496.3,307.1"/><polyline points="587.0,204.7 569.2,307.1"/><polyline points="714.9,224.6 701.6,307.1"/><polyline points="814.0,98.2 793.8,125.0 784.9,178.5 775.9,232.1"/><polyline points="451.6,145.8 438.2,156.2"/><polyline points="512.6,220.2 534.9,214.2"/><polyline points="814.0,102.6 843.8,77.4 861.6,35.7 912.2,0.0"/><polyline points="940.5,26.8 909.2,41.7 901.8,59.5 827.4,105.6 825.9,113.1 861.6,178.5 889.9,183.0 903.3,171.1 900.3,151.7"/><polyline points="901.8,59.5 973.2,190.4 915.2,227.6 882.4,235.0 878.0,214.2 858.6,211.2 831.9,224.6 814.0,208.3"/><polyline points="889.9,183.0 915.2,227.6"/><polyline points="930.0,0.0 940.5,14.9 940.5,26.8"/><polyline points="936.0,0.0 953.8,35.7 956.8,68.4 970.2,83.3 971.7,95.2"/><polyline points="939.0,28.3 924.1,47.6 931.5,89.3"/><polyline points="950.9,0.0 962.8,6.0 1049.0,133.9 1075.8,148.8 1083.3,163.6"/><polyline points="814.0,239.5 912.2,255.9 1081.8,165.1 1099.6,160.7 1220.1,127.9"/><polyline points="1108.6,166.6 1175.5,153.2 1220.1,178.5"/><polyline points="1099.6,160.7 1185.9,279.7 1206.7,307.1"/><polyline points="1099.6,160.7 1077.3,101.2 1087.7,68.4 1111.5,50.6 1129.4,46.1 1145.7,49.1 1135.3,104.1 1147.2,125.0 1221.0,110.1"/><polyline points="1108.6,0.0 1127.9,46.1"/><polyline points="1145.7,47.6 1160.6,26.8 1221.0,7.4"/><polyline points="1160.6,26.8 1171.0,0.0"/><polyline points="821.4,242.5 814.0,294.6"/><polyline points="864.6,251.4 855.7,303.5"/><polyline points="912.2,255.9 904.7,307.1"/><polyline points="1138.3,261.8 1168.1,307.1"/><polyline points="1184.4,279.7 1221.0,226.1"/><polyline points="0.0,335.3 81.8,423.0"/><polyline points="64.0,307.0 13.4,351.6"/><polyline points="95.2,307.0 145.8,360.6"/><polyline points="55.0,318.9 120.5,385.8 142.8,391.8 154.7,402.2 168.1,426.0 165.1,440.9 145.8,455.8 130.9,445.4"/><polyline points="208.3,307.0 120.5,385.8 81.8,423.0 0.0,501.9"/><polyline points="156.2,307.0 125.0,335.3"/><polyline points="178.5,333.8 220.2,378.4 252.9,409.6 297.5,434.9 407.0,452.8"/><polyline points="220.2,378.4 194.9,402.2 172.6,429.0 166.6,446.8 127.9,482.5 101.2,527.2 74.4,580.7 69.9,614.1"/><polyline points="339.2,307.0 282.7,405.2 238.0,497.4 208.3,554.0 178.5,614.1"/><polyline points="171.1,445.4 194.9,472.1 160.7,501.9"/><polyline points="205.3,467.7 238.0,497.4"/><polyline points="142.8,488.5 205.3,554.0 315.4,571.8 407.0,588.2"/><polyline points="336.2,434.9 315.4,571.8 309.4,614.1"/><polyline points="288.6,501.9 264.8,614.1"/><polyline points="345.1,405.2 339.2,375.4 357.0,366.5 407.0,371.0"/><polyline points="345.1,402.2 371.9,397.7 407.0,408.2"/><polyline points="62.5,443.9 66.9,530.1"/><polyline points="0.0,440.9 31.2,467.7"/><polyline points="0.0,509.3 74.4,580.7 98.2,614.1"/><polyline points="351.1,307.0 407.0,321.9"/><polyline points="160.7,579.2 183.0,592.6"/><polyline points="407.0,323.4 454.6,332.3 515.6,344.2 698.6,372.5 814.0,390.3"/><polyline points="426.3,307.0 423.4,324.9"/><polyline points="496.3,307.0 491.8,336.8"/><polyline points="570.6,307.0 561.7,345.7"/><polyline points="701.6,307.0 692.6,354.6 680.7,432.0 668.8,497.4 654.0,614.1"/><polyline points="454.6,332.3 442.7,393.3 426.3,497.4"/><polyline points="515.6,344.2 503.7,402.2 493.3,473.6 475.4,614.1"/><polyline points="814.0,315.9 796.8,390.3 775.9,512.3 759.6,614.1"/><polyline points="430.8,457.3 493.3,469.2 668.8,497.4 775.9,512.3 814.0,519.7"/><polyline points="407.0,373.9 429.3,375.4"/><polyline points="407.0,409.6 427.8,414.1"/><polyline points="420.4,542.0 413.0,589.7"/><polyline points="407.0,589.7 424.9,594.1 552.8,614.1"/><polyline points="903.3,307.0 885.4,403.7 867.6,527.2 855.7,614.1"/><polyline points="814.0,390.3 885.4,403.7"/><polyline points="814.0,519.7 867.6,528.7 1093.7,568.8 1114.5,577.8 1221.0,588.2"/><polyline points="968.7,307.0 965.7,344.2 950.9,342.7 943.4,351.6 933.0,415.6 918.1,478.1 879.5,473.6"/><polyline points="965.7,344.2 1022.3,366.5 1099.6,368.0 1093.7,320.4"/><polyline points="986.6,351.6 985.1,368.0 1007.4,371.0 1010.4,360.6"/><polyline points="1099.6,368.0 1180.0,473.6 1200.8,478.1 1221.0,469.2"/><polyline points="1168.1,307.0 1221.0,368.0"/><polyline points="933.0,415.6 1046.1,434.9 1072.9,446.8 1084.8,461.7 1092.2,491.5 1090.7,539.1 1096.7,545.0 1092.2,568.8"/><polyline points="1084.8,463.2 1063.9,476.6 1052.0,503.4"/><polyline points="922.6,457.3 950.9,461.7 956.8,473.6 1001.4,479.6 1013.3,493.0 1037.1,495.9"/><polyline points="934.5,542.0 939.0,531.6 950.9,536.1 952.4,542.0"/><polyline points="1000.0,551.0 1001.4,543.5 1040.1,548.0 1043.1,558.4"/><polyline points="1102.6,542.0 1105.6,519.7 1135.3,524.2 1138.3,542.0 1159.1,554.0 1178.5,561.4 1177.0,576.3 1171.0,580.7"/><polyline points="1099.6,614.1 1108.6,585.2 1126.4,576.3 1171.0,580.7 1221.0,588.2"/><polyline points="1111.5,586.7 1144.3,595.6 1144.3,614.1"/><polyline points="1193.4,585.2 1188.9,614.1"/><polyline points="1126.4,326.3 1132.4,318.9 1150.2,318.9 1180.0,326.3"/><polyline points="92.2,614.0 139.8,655.7 151.7,691.4 160.7,730.0 208.3,783.6 252.9,822.3 327.3,890.7 407.0,921.1"/><polyline points="175.5,614.0 160.7,637.8 141.3,655.7"/><polyline points="264.8,614.0 247.0,703.3 235.0,783.6 229.1,804.4"/><polyline points="153.2,689.9 407.0,728.5"/><polyline points="166.6,816.3 214.2,852.0 297.5,921.1"/><polyline points="150.3,819.3 154.7,875.8 178.5,921.1"/><polyline points="144.3,819.3 147.3,852.0 166.6,921.1"/><polyline points="0.0,667.6 14.9,625.9 29.8,614.0"/><polyline points="56.5,692.8 80.3,680.9"/><polyline points="3.0,739.0 40.2,722.6"/><polyline points="53.6,747.9 98.2,716.6"/><polyline points="44.6,834.2 125.0,785.1 136.9,792.5 148.8,819.3"/><polyline points="29.8,810.4 59.5,875.8 89.3,852.0"/><polyline points="133.9,863.9 151.7,853.5"/><polyline points="68.4,921.1 101.2,898.1"/><polyline points="0.0,881.8 17.9,921.1"/><polyline points="471.0,614.0 451.6,733.0 421.9,921.1"/><polyline points="616.8,640.8 595.9,761.3 569.2,921.1"/><polyline points="407.0,728.5 505.2,746.4 597.4,761.3 734.3,783.6 814.0,792.5"/><polyline points="671.8,631.9 768.5,651.2 814.0,658.6"/><polyline points="621.2,640.8 613.8,718.1"/><polyline points="612.3,736.0 607.8,762.8"/><polyline points="662.9,663.1 654.0,725.6 661.4,731.5 655.4,770.2"/><polyline points="692.6,664.6 686.7,703.3 729.8,709.2 740.2,661.6"/><polyline points="694.1,706.2 680.7,774.7"/><polyline points="729.8,709.2 719.4,780.6"/><polyline points="738.7,712.2 731.3,783.6"/><polyline points="762.5,614.0 743.2,718.1"/><polyline points="743.2,718.1 814.0,727.1"/><polyline points="778.9,706.2 814.0,712.2"/><polyline points="814.0,846.1 804.2,921.1"/><polyline points="867.6,614.0 1069.9,646.7 1087.7,646.7 1095.2,640.8 1101.1,614.0"/><polyline points="1099.6,614.0 1095.2,640.8 1066.9,807.4 1061.0,852.0 1046.1,875.8 998.5,921.1"/><polyline points="814.0,657.1 843.8,661.6"/><polyline points="854.2,614.0 843.8,661.6 836.3,712.2 814.0,846.1"/><polyline points="843.8,682.4 858.6,685.4 867.6,692.8 909.2,694.3 1080.3,722.6"/><polyline points="814.0,710.7 836.3,712.2"/><polyline points="854.2,758.3 1068.4,794.0"/><polyline points="821.4,826.7 959.8,849.0 1052.0,868.4"/><polyline points="995.5,859.5 986.6,921.1"/><polyline points="814.0,902.6 912.2,921.1"/><polyline points="1075.8,921.1 1168.1,840.1 1221.0,777.6"/><polyline points="1148.7,892.2 1206.7,834.2"/><polyline points="1168.1,840.1 1185.9,855.0"/><polyline points="1102.6,703.3 1171.0,713.7"/><polyline points="1101.1,713.7 1171.0,722.6"/><polyline points="1099.6,724.1 1144.3,733.0"/><polyline points="1098.1,733.0 1147.2,741.9 1168.1,750.9"/><polyline points="1096.7,743.4 1133.8,750.9"/><polyline points="1095.2,752.4 1127.9,759.8"/><polyline points="1120.5,707.7 1111.5,767.2"/><polyline points="1168.1,749.4 1136.8,786.6 1123.4,777.6 1121.9,768.7"/><polyline points="1187.4,614.0 1185.9,640.8 1182.9,649.7"/><polyline points="1196.3,658.6 1221.0,661.6"/><polyline points="1182.9,663.1 1175.5,709.2 1171.0,724.1"/><polyline points="1138.3,620.0 1162.1,625.9 1160.6,643.8 1139.8,642.3 1138.3,620.0"/><circle cx="1188.9" cy="655.7" r="6.5"/></g>
<g stroke="#fefefe" stroke-width="1.5"><polyline points="32.7,0.0 208.3,181.5 297.5,276.7 321.3,307.1"/><polyline points="232.1,0.0 232.1,22.3 50.6,196.4 0.0,248.4"/><polyline points="0.0,142.8 52.1,194.9 157.7,307.1"/><polyline points="208.3,183.0 95.2,307.1"/><polyline points="0.0,278.2 41.7,241.0 65.5,215.7 89.3,235.0"/><polyline points="0.0,175.5 11.9,148.8 26.8,145.8 35.7,160.7 35.7,172.6 0.0,208.3"/><polyline points="407.0,25.3 345.1,68.4 303.5,104.1 285.6,133.9 279.7,166.6 276.7,190.4"/><polyline points="374.9,168.1 407.0,174.1"/><polyline points="349.6,307.1 342.2,252.9 351.1,205.3 360.0,196.4 366.0,184.5 389.8,184.5 392.7,199.3"/><polyline points="377.9,232.1 336.2,307.1"/><polyline points="123.9,0.0 75.4,42.5 44.8,73.1 16.4,98.5 9.0,107.5 0.0,131.3"/><polyline points="79.1,0.0 98.5,19.4"/><polyline points="156.7,0.0 164.2,9.0 161.2,20.9 152.2,28.4 103.0,68.7"/><polyline points="119.4,56.7 131.3,55.2 147.8,37.3 146.3,32.8"/><polyline points="153.7,27.6 182.8,59.0"/><polyline points="44.8,73.1 73.1,104.5 99.3,135.1"/><polyline points="29.9,89.6 38.8,97.0 34.3,103.0 53.7,128.4 65.7,120.9 53.7,104.5 59.0,89.6"/><polyline points="0.0,149.3 6.0,146.3 17.9,145.5 29.9,154.0"/><polyline points="465.0,0.0 454.6,53.6 433.8,175.5 427.8,238.0 421.9,307.1"/><polyline points="407.0,10.4 436.8,0.0"/><polyline points="456.1,53.6 645.0,84.8"/><polyline points="645.0,84.8 648.0,68.4 665.9,50.6 743.2,0.0"/><polyline points="645.0,84.8 674.8,95.2 686.7,105.6 685.2,139.8 674.8,190.4 680.7,196.4 704.5,202.3 719.4,208.3 775.9,214.2 814.0,220.2"/><polyline points="590.0,0.0 578.1,71.4"/><polyline points="561.7,0.0 612.3,7.4 627.2,0.0"/><polyline points="645.0,84.8 636.1,130.9 625.7,208.3"/><polyline points="407.0,172.6 515.6,191.9 585.5,204.7 775.9,232.1 814.0,238.0"/><polyline points="515.6,191.9 496.3,307.1"/><polyline points="587.0,204.7 569.2,307.1"/><polyline points="714.9,224.6 701.6,307.1"/><polyline points="814.0,98.2 793.8,125.0 784.9,178.5 775.9,232.1"/><polyline points="451.6,145.8 438.2,156.2"/><polyline points="512.6,220.2 534.9,214.2"/><polyline points="814.0,102.6 843.8,77.4 861.6,35.7 912.2,0.0"/><polyline points="940.5,26.8 909.2,41.7 901.8,59.5 827.4,105.6 825.9,113.1 861.6,178.5 889.9,183.0 903.3,171.1 900.3,151.7"/><polyline points="901.8,59.5 973.2,190.4 915.2,227.6 882.4,235.0 878.0,214.2 858.6,211.2 831.9,224.6 814.0,208.3"/><polyline points="889.9,183.0 915.2,227.6"/><polyline points="930.0,0.0 940.5,14.9 940.5,26.8"/><polyline points="936.0,0.0 953.8,35.7 956.8,68.4 970.2,83.3 971.7,95.2"/><polyline points="939.0,28.3 924.1,47.6 931.5,89.3"/><polyline points="950.9,0.0 962.8,6.0 1049.0,133.9 1075.8,148.8 1083.3,163.6"/><polyline points="814.0,239.5 912.2,255.9 1081.8,165.1 1099.6,160.7 1220.1,127.9"/><polyline points="1108.6,166.6 1175.5,153.2 1220.1,178.5"/><polyline points="1099.6,160.7 1185.9,279.7 1206.7,307.1"/><polyline points="1099.6,160.7 1077.3,101.2 1087.7,68.4 1111.5,50.6 1129.4,46.1 1145.7,49.1 1135.3,104.1 1147.2,125.0 1221.0,110.1"/><polyline points="1108.6,0.0 1127.9,46.1"/><polyline points="1145.7,47.6 1160.6,26.8 1221.0,7.4"/><polyline points="1160.6,26.8 1171.0,0.0"/><polyline points="821.4,242.5 814.0,294.6"/><polyline points="864.6,251.4 855.7,303.5"/><polyline points="912.2,255.9 904.7,307.1"/><polyline points="1138.3,261.8 1168.1,307.1"/><polyline points="1184.4,279.7 1221.0,226.1"/><polyline points="0.0,335.3 81.8,423.0"/><polyline points="64.0,307.0 13.4,351.6"/><polyline points="95.2,307.0 145.8,360.6"/><polyline points="55.0,318.9 120.5,385.8 142.8,391.8 154.7,402.2 168.1,426.0 165.1,440.9 145.8,455.8 130.9,445.4"/><polyline points="208.3,307.0 120.5,385.8 81.8,423.0 0.0,501.9"/><polyline points="156.2,307.0 125.0,335.3"/><polyline points="178.5,333.8 220.2,378.4 252.9,409.6 297.5,434.9 407.0,452.8"/><polyline points="220.2,378.4 194.9,402.2 172.6,429.0 166.6,446.8 127.9,482.5 101.2,527.2 74.4,580.7 69.9,614.1"/><polyline points="339.2,307.0 282.7,405.2 238.0,497.4 208.3,554.0 178.5,614.1"/><polyline points="171.1,445.4 194.9,472.1 160.7,501.9"/><polyline points="205.3,467.7 238.0,497.4"/><polyline points="142.8,488.5 205.3,554.0 315.4,571.8 407.0,588.2"/><polyline points="336.2,434.9 315.4,571.8 309.4,614.1"/><polyline points="288.6,501.9 264.8,614.1"/><polyline points="345.1,405.2 339.2,375.4 357.0,366.5 407.0,371.0"/><polyline points="345.1,402.2 371.9,397.7 407.0,408.2"/><polyline points="62.5,443.9 66.9,530.1"/><polyline points="0.0,440.9 31.2,467.7"/><polyline points="0.0,509.3 74.4,580.7 98.2,614.1"/><polyline points="351.1,307.0 407.0,321.9"/><polyline points="160.7,579.2 183.0,592.6"/><polyline points="407.0,323.4 454.6,332.3 515.6,344.2 698.6,372.5 814.0,390.3"/><polyline points="426.3,307.0 423.4,324.9"/><polyline points="496.3,307.0 491.8,336.8"/><polyline points="570.6,307.0 561.7,345.7"/><polyline points="701.6,307.0 692.6,354.6 680.7,432.0 668.8,497.4 654.0,614.1"/><polyline points="454.6,332.3 442.7,393.3 426.3,497.4"/><polyline points="515.6,344.2 503.7,402.2 493.3,473.6 475.4,614.1"/><polyline points="814.0,315.9 796.8,390.3 775.9,512.3 759.6,614.1"/><polyline points="430.8,457.3 493.3,469.2 668.8,497.4 775.9,512.3 814.0,519.7"/><polyline points="407.0,373.9 429.3,375.4"/><polyline points="407.0,409.6 427.8,414.1"/><polyline points="420.4,542.0 413.0,589.7"/><polyline points="407.0,589.7 424.9,594.1 552.8,614.1"/><polyline points="903.3,307.0 885.4,403.7 867.6,527.2 855.7,614.1"/><polyline points="814.0,390.3 885.4,403.7"/><polyline points="814.0,519.7 867.6,528.7 1093.7,568.8 1114.5,577.8 1221.0,588.2"/><polyline points="968.7,307.0 965.7,344.2 950.9,342.7 943.4,351.6 933.0,415.6 918.1,478.1 879.5,473.6"/><polyline points="965.7,344.2 1022.3,366.5 1099.6,368.0 1093.7,320.4"/><polyline points="986.6,351.6 985.1,368.0 1007.4,371.0 1010.4,360.6"/><polyline points="1099.6,368.0 1180.0,473.6 1200.8,478.1 1221.0,469.2"/><polyline points="1168.1,307.0 1221.0,368.0"/><polyline points="933.0,415.6 1046.1,434.9 1072.9,446.8 1084.8,461.7 1092.2,491.5 1090.7,539.1 1096.7,545.0 1092.2,568.8"/><polyline points="1084.8,463.2 1063.9,476.6 1052.0,503.4"/><polyline points="922.6,457.3 950.9,461.7 956.8,473.6 1001.4,479.6 1013.3,493.0 1037.1,495.9"/><polyline points="934.5,542.0 939.0,531.6 950.9,536.1 952.4,542.0"/><polyline points="1000.0,551.0 1001.4,543.5 1040.1,548.0 1043.1,558.4"/><polyline points="1102.6,542.0 1105.6,519.7 1135.3,524.2 1138.3,542.0 1159.1,554.0 1178.5,561.4 1177.0,576.3 1171.0,580.7"/><polyline points="1099.6,614.1 1108.6,585.2 1126.4,576.3 1171.0,580.7 1221.0,588.2"/><polyline points="1111.5,586.7 1144.3,595.6 1144.3,614.1"/><polyline points="1193.4,585.2 1188.9,614.1"/><polyline points="1126.4,326.3 1132.4,318.9 1150.2,318.9 1180.0,326.3"/><polyline points="92.2,614.0 139.8,655.7 151.7,691.4 160.7,730.0 208.3,783.6 252.9,822.3 327.3,890.7 407.0,921.1"/><polyline points="175.5,614.0 160.7,637.8 141.3,655.7"/><polyline points="264.8,614.0 247.0,703.3 235.0,783.6 229.1,804.4"/><polyline points="153.2,689.9 407.0,728.5"/><polyline points="166.6,816.3 214.2,852.0 297.5,921.1"/><polyline points="150.3,819.3 154.7,875.8 178.5,921.1"/><polyline points="144.3,819.3 147.3,852.0 166.6,921.1"/><polyline points="0.0,667.6 14.9,625.9 29.8,614.0"/><polyline points="56.5,692.8 80.3,680.9"/><polyline points="3.0,739.0 40.2,722.6"/><polyline points="53.6,747.9 98.2,716.6"/><polyline points="44.6,834.2 125.0,785.1 136.9,792.5 148.8,819.3"/><polyline points="29.8,810.4 59.5,875.8 89.3,852.0"/><polyline points="133.9,863.9 151.7,853.5"/><polyline points="68.4,921.1 101.2,898.1"/><polyline points="0.0,881.8 17.9,921.1"/><polyline points="471.0,614.0 451.6,733.0 421.9,921.1"/><polyline points="616.8,640.8 595.9,761.3 569.2,921.1"/><polyline points="407.0,728.5 505.2,746.4 597.4,761.3 734.3,783.6 814.0,792.5"/><polyline points="671.8,631.9 768.5,651.2 814.0,658.6"/><polyline points="621.2,640.8 613.8,718.1"/><polyline points="612.3,736.0 607.8,762.8"/><polyline points="662.9,663.1 654.0,725.6 661.4,731.5 655.4,770.2"/><polyline points="692.6,664.6 686.7,703.3 729.8,709.2 740.2,661.6"/><polyline points="694.1,706.2 680.7,774.7"/><polyline points="729.8,709.2 719.4,780.6"/><polyline points="738.7,712.2 731.3,783.6"/><polyline points="762.5,614.0 743.2,718.1"/><polyline points="743.2,718.1 814.0,727.1"/><polyline points="778.9,706.2 814.0,712.2"/><polyline points="814.0,846.1 804.2,921.1"/><polyline points="867.6,614.0 1069.9,646.7 1087.7,646.7 1095.2,640.8 1101.1,614.0"/><polyline points="1099.6,614.0 1095.2,640.8 1066.9,807.4 1061.0,852.0 1046.1,875.8 998.5,921.1"/><polyline points="814.0,657.1 843.8,661.6"/><polyline points="854.2,614.0 843.8,661.6 836.3,712.2 814.0,846.1"/><polyline points="843.8,682.4 858.6,685.4 867.6,692.8 909.2,694.3 1080.3,722.6"/><polyline points="814.0,710.7 836.3,712.2"/><polyline points="854.2,758.3 1068.4,794.0"/><polyline points="821.4,826.7 959.8,849.0 1052.0,868.4"/><polyline points="995.5,859.5 986.6,921.1"/><polyline points="814.0,902.6 912.2,921.1"/><polyline points="1075.8,921.1 1168.1,840.1 1221.0,777.6"/><polyline points="1148.7,892.2 1206.7,834.2"/><polyline points="1168.1,840.1 1185.9,855.0"/><polyline points="1102.6,703.3 1171.0,713.7"/><polyline points="1101.1,713.7 1171.0,722.6"/><polyline points="1099.6,724.1 1144.3,733.0"/><polyline points="1098.1,733.0 1147.2,741.9 1168.1,750.9"/><polyline points="1096.7,743.4 1133.8,750.9"/><polyline points="1095.2,752.4 1127.9,759.8"/><polyline points="1120.5,707.7 1111.5,767.2"/><polyline points="1168.1,749.4 1136.8,786.6 1123.4,777.6 1121.9,768.7"/><polyline points="1187.4,614.0 1185.9,640.8 1182.9,649.7"/><polyline points="1196.3,658.6 1221.0,661.6"/><polyline points="1182.9,663.1 1175.5,709.2 1171.0,724.1"/><polyline points="1138.3,620.0 1162.1,625.9 1160.6,643.8 1139.8,642.3 1138.3,620.0"/><circle cx="1188.9" cy="655.7" r="6.5"/></g>
<g stroke="#dcb57c" stroke-width="5.5"><polyline points="0.0,559.9 17.9,577.8 44.6,614.1"/><polyline points="44.6,614.0 89.3,691.4 145.8,786.6 153.2,804.4"/><circle cx="157.7" cy="810.4" r="6.0"/></g>
<g stroke="#f8d68f" stroke-width="3.8"><polyline points="0.0,559.9 17.9,577.8 44.6,614.1"/><polyline points="44.6,614.0 89.3,691.4 145.8,786.6 153.2,804.4"/><circle cx="157.7" cy="810.4" r="6.0"/></g>
</g>
<rect x="1143.2" y="617.4" width="8" height="8" fill="#3d8fdc"/><text x="1147.2" y="624.4" font-size="8" font-weight="bold" fill="#fff" text-anchor="middle" font-family="Liberation Sans, sans-serif">P</text><rect x="1115.9" y="729.9" width="8" height="8" fill="#3d8fdc"/><text x="1119.9" y="736.9" font-size="8" font-weight="bold" fill="#fff" text-anchor="middle" font-family="Liberation Sans, sans-serif">P</text>
<rect x="306" y="155" width="9" height="8" fill="#8ec3e6" transform="rotate(8 310 159)"/><rect x="874" y="226" width="5" height="5" fill="#8ec3e6"/>
<g font-family="Liberation Sans, sans-serif" font-size="7.5" fill="#5e5a55" text-anchor="middle"><text transform="translate(18,16) rotate(48)" dy="2.5">D Avenue</text><text transform="translate(114,9) rotate(-45)" dy="2.5">13th Street</text><text transform="translate(217,32) rotate(-45)" dy="2.5">12th Street</text><text transform="translate(38,101) rotate(-45)" dy="2.5">13th Street</text><text transform="translate(29,177) rotate(50)" dy="2.5">C Avenue</text><text transform="translate(159,240) rotate(-45)" dy="2.5">11th Street</text><text transform="translate(101,253) rotate(50)" dy="2.5">C Avenue</text><text transform="translate(52,311) rotate(-45)" dy="2.5">11th Street</text><text transform="translate(16,361) rotate(55)" dy="2.5">B Avenue</text><text transform="translate(164,343) rotate(-45)" dy="2.5">10th Street</text><text transform="translate(195,352) rotate(50)" dy="2.5">C Avenue</text><text transform="translate(186,414) rotate(-50)" dy="2.5">9th Street</text><text transform="translate(38,464) rotate(-45)" dy="2.5">10th Street</text><text transform="translate(11,522) rotate(55)" dy="2.5">South Avenue</text><text transform="translate(105,526) rotate(-60)" dy="2.5">9th Street</text><text transform="translate(226,508) rotate(-70)" dy="2.5">8th Street</text><text transform="translate(177,526) rotate(50)" dy="2.5">B Avenue</text><text transform="translate(325,491) rotate(-80)" dy="2.5">7th Street</text><text transform="translate(286,569) rotate(10)" dy="2.5">B Avenue</text><text transform="translate(96,607) rotate(58)" dy="2.5">South Avenue</text><text transform="translate(172,616) rotate(-70)" dy="2.5">8th Street</text><text transform="translate(262,616) rotate(-80)" dy="2.5">7th Street</text><text transform="translate(193,692) rotate(8)" dy="2.5">A Avenue</text><text transform="translate(329,714) rotate(8)" dy="2.5">A Avenue</text><text transform="translate(155,710) rotate(58)" dy="2.5">South Avenue</text><text transform="translate(242,741) rotate(-85)" dy="2.5">7th Street</text><text transform="translate(231,804) rotate(50)" dy="2.5">South Avenue</text><text transform="translate(208,844) rotate(60)" dy="2.5">Fawley Road</text><text transform="translate(464,9) rotate(-85)" dy="2.5">G Ave</text><text transform="translate(584,20) rotate(-85)" dy="2.5">H Avenue</text><text transform="translate(504,62) rotate(8)" dy="2.5">F Avenue</text><text transform="translate(625,83) rotate(8)" dy="2.5">F Avenue</text><text transform="translate(714,20) rotate(-35)" dy="2.5">F Avenue</text><text transform="translate(444,123) rotate(-80)" dy="2.5">7th Street</text><text transform="translate(634,150) rotate(-80)" dy="2.5">5th Street</text><text transform="translate(423,177) rotate(8)" dy="2.5">E Avenue</text><text transform="translate(544,197) rotate(8)" dy="2.5">E Avenue</text><text transform="translate(665,217) rotate(8)" dy="2.5">E Avenue</text><text transform="translate(786,238) rotate(8)" dy="2.5">E Avenue</text><text transform="translate(934,244) rotate(-30)" dy="2.5">E Avenue</text><text transform="translate(1037,190) rotate(-30)" dy="2.5">E Avenue</text><text transform="translate(504,240) rotate(-80)" dy="2.5">6th Street</text><text transform="translate(576,258) rotate(-80)" dy="2.5">5th Street</text><text transform="translate(389,320) rotate(10)" dy="2.5">D Avenue</text><text transform="translate(508,341) rotate(10)" dy="2.5">D Avenue</text><text transform="translate(629,361) rotate(10)" dy="2.5">D Avenue</text><text transform="translate(750,381) rotate(10)" dy="2.5">D Avenue</text><text transform="translate(791,410) rotate(-80)" dy="2.5">3rd Street</text><text transform="translate(902,316) rotate(-80)" dy="2.5">2nd Street</text><text transform="translate(450,459) rotate(8)" dy="2.5">C Avenue</text><text transform="translate(571,482) rotate(8)" dy="2.5">C Avenue</text><text transform="translate(692,499) rotate(8)" dy="2.5">C Avenue</text><text transform="translate(947,542) rotate(8)" dy="2.5">C Avenue</text><text transform="translate(1068,562) rotate(8)" dy="2.5">C Avenue</text><text transform="translate(482,553) rotate(-80)" dy="2.5">5th Street</text><text transform="translate(661,553) rotate(-80)" dy="2.5">4th Street</text><text transform="translate(764,607) rotate(-80)" dy="2.5">3rd Street</text><text transform="translate(858,607) rotate(-80)" dy="2.5">2nd Street</text><text transform="translate(795,654) rotate(8)" dy="2.5">B Avenue</text><text transform="translate(889,695) rotate(8)" dy="2.5">B Avenue</text><text transform="translate(1010,713) rotate(8)" dy="2.5">B Avenue</text><text transform="translate(459,679) rotate(-80)" dy="2.5">5th Street</text><text transform="translate(610,692) rotate(-80)" dy="2.5">4th Street</text><text transform="translate(835,728) rotate(-80)" dy="2.5">2nd Street</text><text transform="translate(450,734) rotate(8)" dy="2.5">A Avenue</text><text transform="translate(571,755) rotate(8)" dy="2.5">A Avenue</text><text transform="translate(692,775) rotate(8)" dy="2.5">A Avenue</text><text transform="translate(867,835) rotate(8)" dy="2.5">A Avenue</text><text transform="translate(988,856) rotate(8)" dy="2.5">A Avenue</text><text transform="translate(589,817) rotate(-85)" dy="2.5">4th Street</text><text transform="translate(441,791) rotate(-82)" dy="2.5">5th Street</text><text transform="translate(1086,696) rotate(-85)" dy="2.5">1st Street</text><text transform="translate(1064,817) rotate(-85)" dy="2.5">1st Street</text><text transform="translate(1158,204) rotate(60)" dy="2.5">Catland Road</text><text transform="translate(1211,293) rotate(60)" dy="2.5">Catland Road</text><text transform="translate(1185,137) rotate(-12)" dy="2.5">P.L.P.H. Road</text><text transform="translate(1207,164) rotate(30)" dy="2.5">Burmah Road</text><text transform="translate(1135,114) rotate(70)" dy="2.5">Foresthole South</text><text transform="translate(1180,844) rotate(-50)" dy="2.5">Church Lane</text><text transform="translate(1204,866) rotate(-50)" dy="2.5">Orchard Close</text><text transform="translate(455,46) rotate(-80)" dy="2.5">7th Street</text><text transform="translate(96,688) rotate(65)" dy="2.5">Long Lane</text><text transform="translate(134,756) rotate(65)" dy="2.5">Long Lane</text><text transform="translate(22,646) rotate(70)" dy="2.5">The Close</text><text transform="translate(59,836) rotate(70)" dy="2.5">Long Lane Close</text></g>
</svg><!--MAPEND--><!--MARKSTART--><svg class="a" style="left:243.5px;top:73px" width="12" height="8" viewBox="0 0 12 8"><path d="M0.5 1.5L6 7 11.5 1.5" fill="#4fa27e" stroke="#161616" stroke-width="1.1"/><path d="M0.5 1.5L6 7V1.5z" fill="#fdc94f"/><path d="M0.5 1.5L6 7" stroke="#161616" stroke-width="1.1"/><rect x="0" y="0" width="12" height="2" fill="none"/></svg>
<div class="mk" style="left:196px;top:56px;background:linear-gradient(90deg,#fdc94f 50%,#4fa27e 50%);color:#2a2a2a"><span>S-0000055</span></div>
<svg class="a" style="left:180.5px;top:108px" width="12" height="8" viewBox="0 0 12 8"><path d="M0.5 1.5L6 7 11.5 1.5" fill="#4fa27e" stroke="#161616" stroke-width="1.1"/><rect x="0" y="0" width="12" height="2" fill="#4fa27e"/></svg>
<div class="mk" style="left:133px;top:91px;background:#4fa27e;color:#fff"><span>S-0000060</span></div>
<svg class="a" style="left:652.5px;top:126px" width="12" height="8" viewBox="0 0 12 8"><path d="M0.5 1.5L6 7 11.5 1.5" fill="#d54a2c" stroke="#161616" stroke-width="1.1"/><rect x="0" y="0" width="12" height="2" fill="#d54a2c"/></svg>
<div class="mk" style="left:605px;top:109px;background:#d54a2c;color:#fff;border-radius:0 2px 2px 0"><svg class="a" style="left:0;top:0" width="20" height="18" viewBox="0 0 20 18"><rect width="20" height="18" fill="#fff"/><circle cx="10" cy="9" r="8.3" fill="#3a3a3a"/><path d="M6 9.2A4 4 0 0 1 12.6 6.2" stroke="#fff" stroke-width="2" fill="none"/><path d="M14.8 3.8L14.6 8.4 10.6 7z" fill="#fff"/><path d="M14 8.8A4 4 0 0 1 7.4 11.8" stroke="#fff" stroke-width="2" fill="none"/><path d="M5.2 14.2L5.4 9.6 9.4 11z" fill="#fff"/></svg><span>S-0000026</span></div>
<div class="mx" style="left:591px;top:109px"><svg width="13" height="18" viewBox="0 0 13 18"><path d="M5 3.2h3l-.5 8.6h-2z" fill="#000"/><circle cx="6.5" cy="14.3" r="1.6" fill="#000"/></svg></div>
<svg class="a" style="left:783.5px;top:162px" width="12" height="8" viewBox="0 0 12 8"><path d="M0.5 1.5L6 7 11.5 1.5" fill="#d54a2c" stroke="#161616" stroke-width="1.1"/><rect x="0" y="0" width="12" height="2" fill="#d54a2c"/></svg>
<div class="mk" style="left:736px;top:145px;background:#d54a2c;color:#fff;border-radius:0 2px 2px 0"><svg class="a" style="left:0;top:0" width="20" height="18" viewBox="0 0 20 18"><rect width="20" height="18" fill="#fff"/><circle cx="10" cy="9" r="7.8" fill="#fff" stroke="#111" stroke-width="1.2"/><path d="M10 4.5V11.3 M6.5 8.3L10 11.6 13.5 8.3 M6.3 13.6H13.7" stroke="#111" stroke-width="1.2" fill="none"/></svg><svg class="a" style="right:0;top:0" width="20" height="18" viewBox="0 0 20 18"><rect width="20" height="18" fill="#a3a3a3"/><rect width="1.2" height="18" fill="#fff"/><rect x="2.1" y="1.6" width="6.8" height="6.8" rx="1.2" fill="#fff" stroke="#000" stroke-width="1.3"/><rect x="11.1" y="1.6" width="6.8" height="6.8" rx="1.2" fill="#fff" stroke="#000" stroke-width="1.3"/><rect x="2.1" y="10.6" width="6.8" height="6.8" rx="1.2" fill="#fff" stroke="#000" stroke-width="1.3"/><rect x="11.1" y="10.6" width="6.8" height="6.8" rx="1.2" fill="#fff" stroke="#000" stroke-width="1.3"/><rect x="3.6" y="3.1" width="3.6" height="3.6" fill="#000"/><rect x="12.6" y="12.1" width="3.6" height="3.6" fill="#000"/></svg><span>S-0000042</span></div>
<div class="mx" style="left:722px;top:145px"><svg width="13" height="18" viewBox="0 0 13 18"><path d="M5 3.2h3l-.5 8.6h-2z" fill="#000"/><circle cx="6.5" cy="14.3" r="1.6" fill="#000"/></svg></div>
<svg class="a" style="left:251.5px;top:206px" width="12" height="8" viewBox="0 0 12 8"><path d="M0.5 1.5L6 7 11.5 1.5" fill="#d54a2c" stroke="#161616" stroke-width="1.1"/><rect x="0" y="0" width="12" height="2" fill="#d54a2c"/></svg>
<div class="mk" style="left:204px;top:189px;background:#d54a2c;color:#fff"><svg class="a" style="left:0;top:0" width="20" height="18" viewBox="0 0 20 18"><rect width="20" height="18" fill="#fff"/><path d="M4.5 16L11.2 9.3" stroke="#000" stroke-width="2.6" stroke-linecap="round"/><path d="M15.5 16L6.5 6" stroke="#000" stroke-width="2.2" stroke-linecap="round"/><path d="M3 4.5c0 2 1.6 3.4 3.4 3.1L7.6 6.4c.3-1.8-1-3.6-3-3.5L6 4.3 5.2 5.4 3.8 5z" fill="#000"/><path d="M10 3.5c2-1.6 4.5-1.2 5.6.2l1.6 1.6-1.5 1.7-1.3-.6-2.2 2.3-1.2-1.3 1.3-1.6c-.6-1.3-1.3-2-2.3-2.3z" fill="#000"/></svg><span>S-0000016</span></div>
<svg class="a" style="left:431.5px;top:229px" width="12" height="8" viewBox="0 0 12 8"><path d="M0.5 1.5L6 7 11.5 1.5" fill="#d54a2c" stroke="#161616" stroke-width="1.1"/><rect x="0" y="0" width="12" height="2" fill="#d54a2c"/></svg>
<div class="mk" style="left:384px;top:212px;background:#d54a2c;color:#fff"><svg class="a" style="left:0;top:0" width="20" height="18" viewBox="0 0 20 18"><rect width="20" height="18" fill="#fff"/><rect x="2.5" y="1.8" width="15" height="14" rx="3" fill="#d2d2d2" stroke="#111" stroke-width="1.3"/><circle cx="10" cy="7.6" r="2.8" fill="none" stroke="#111" stroke-width="1.1"/><path d="M8.3 10l-1 3.3 1.2-.4.6 1 .9-3 .9 3 .6-1 1.2.4-1-3.3" fill="none" stroke="#111" stroke-width="1"/></svg><svg class="a" style="right:0;top:0" width="20" height="18" viewBox="0 0 20 18"><rect width="20" height="18" fill="#a3a3a3"/><rect width="1.2" height="18" fill="#fff"/><rect x="2.1" y="1.6" width="6.8" height="6.8" rx="1.2" fill="#fff" stroke="#000" stroke-width="1.3"/><rect x="11.1" y="1.6" width="6.8" height="6.8" rx="1.2" fill="#fff" stroke="#000" stroke-width="1.3"/><rect x="2.1" y="10.6" width="6.8" height="6.8" rx="1.2" fill="#fff" stroke="#000" stroke-width="1.3"/><rect x="11.1" y="10.6" width="6.8" height="6.8" rx="1.2" fill="#fff" stroke="#000" stroke-width="1.3"/><rect x="3.6" y="3.1" width="3.6" height="3.6" fill="#000"/><rect x="12.6" y="12.1" width="3.6" height="3.6" fill="#000"/></svg><span>S-00000002</span></div>
<svg class="a" style="left:246.5px;top:272px" width="12" height="8" viewBox="0 0 12 8"><path d="M0.5 1.5L6 7 11.5 1.5" fill="#d54a2c" stroke="#161616" stroke-width="1.1"/><rect x="0" y="0" width="12" height="2" fill="#d54a2c"/></svg>
<div class="mk" style="left:199px;top:255px;background:#d54a2c;color:#fff"><svg class="a" style="left:0;top:0" width="20" height="18" viewBox="0 0 20 18"><rect width="20" height="18" fill="#fff"/><rect x="2.5" y="1.8" width="15" height="14" rx="3" fill="#d2d2d2" stroke="#111" stroke-width="1.3"/><path d="M6.8 9l2.2 2.2 4.4-4.4" stroke="#111" stroke-width="1.4" fill="none"/></svg><svg class="a" style="right:0;top:0" width="20" height="18" viewBox="0 0 20 18"><rect width="20" height="18" fill="#ffffff"/><rect width="1.2" height="18" fill="#fff"/><rect x="2.1" y="1.6" width="6.8" height="6.8" rx="1.2" fill="#fff" stroke="#000" stroke-width="1.3"/><rect x="11.1" y="1.6" width="6.8" height="6.8" rx="1.2" fill="#fff" stroke="#000" stroke-width="1.3"/><rect x="2.1" y="10.6" width="6.8" height="6.8" rx="1.2" fill="#fff" stroke="#000" stroke-width="1.3"/><rect x="11.1" y="10.6" width="6.8" height="6.8" rx="1.2" fill="#fff" stroke="#000" stroke-width="1.3"/></svg><span>S-0000045</span></div>
<svg class="a" style="left:656.5px;top:294px" width="12" height="8" viewBox="0 0 12 8"><path d="M0.5 1.5L6 7 11.5 1.5" fill="#3b7bbf" stroke="#161616" stroke-width="1.1"/><rect x="0" y="0" width="12" height="2" fill="#3b7bbf"/></svg>
<div class="mk" style="left:609px;top:277px;background:#3b7bbf;color:#fff"><svg class="a" style="left:0;top:0" width="20" height="18" viewBox="0 0 20 18"><rect width="20" height="18" fill="#fff"/><circle cx="10" cy="9" r="8.3" fill="#000"/><path d="M5.5 5.2H14.5 M10 14.5V6.5 M6.6 10L10 6.6 13.4 10" stroke="#fff" stroke-width="1.6" fill="none"/></svg><span>S-0000051</span></div>
<svg class="a" style="left:661.5px;top:381px" width="12" height="8" viewBox="0 0 12 8"><path d="M0.5 1.5L6 7 11.5 1.5" fill="#3b7bbf" stroke="#161616" stroke-width="1.1"/><rect x="0" y="0" width="12" height="2" fill="#3b7bbf"/></svg>
<div class="mk" style="left:614px;top:364px;background:#3b7bbf;color:#fff"><svg class="a" style="left:0;top:0" width="20" height="18" viewBox="0 0 20 18"><rect width="20" height="18" fill="#fff"/><circle cx="10" cy="9" r="8.3" fill="#000"/><path d="M5.5 5.2H14.5 M10 14.5V6.5 M6.6 10L10 6.6 13.4 10" stroke="#fff" stroke-width="1.6" fill="none"/></svg><svg class="a" style="right:0;top:0" width="20" height="18" viewBox="0 0 20 18"><rect width="20" height="18" fill="#a3a3a3"/><rect width="1.2" height="18" fill="#fff"/><rect x="2.1" y="1.6" width="6.8" height="6.8" rx="1.2" fill="#fff" stroke="#000" stroke-width="1.3"/><rect x="11.1" y="1.6" width="6.8" height="6.8" rx="1.2" fill="#fff" stroke="#000" stroke-width="1.3"/><rect x="2.1" y="10.6" width="6.8" height="6.8" rx="1.2" fill="#fff" stroke="#000" stroke-width="1.3"/><rect x="11.1" y="10.6" width="6.8" height="6.8" rx="1.2" fill="#fff" stroke="#000" stroke-width="1.3"/><rect x="3.6" y="3.1" width="3.6" height="3.6" fill="#000"/><rect x="12.6" y="12.1" width="3.6" height="3.6" fill="#000"/></svg><span>S-0000063</span></div>
<svg class="a" style="left:494.5px;top:393px" width="12" height="8" viewBox="0 0 12 8"><path d="M0.5 1.5L6 7 11.5 1.5" fill="#d54a2c" stroke="#161616" stroke-width="1.1"/><rect x="0" y="0" width="12" height="2" fill="#d54a2c"/></svg>
<div class="mk" style="left:447px;top:376px;background:#d54a2c;color:#fff"><svg class="a" style="left:0;top:0" width="20" height="18" viewBox="0 0 20 18"><rect width="20" height="18" fill="#fff"/><circle cx="10" cy="9" r="8.3" fill="#000"/><path d="M5.5 5.2H14.5 M10 14.5V6.5 M6.6 10L10 6.6 13.4 10" stroke="#fff" stroke-width="1.6" fill="none"/></svg><svg class="a" style="right:0;top:0" width="20" height="18" viewBox="0 0 20 18"><rect width="20" height="18" fill="#a3a3a3"/><rect width="1.2" height="18" fill="#fff"/><rect x="2.1" y="1.6" width="6.8" height="6.8" rx="1.2" fill="#fff" stroke="#000" stroke-width="1.3"/><rect x="11.1" y="1.6" width="6.8" height="6.8" rx="1.2" fill="#fff" stroke="#000" stroke-width="1.3"/><rect x="2.1" y="10.6" width="6.8" height="6.8" rx="1.2" fill="#fff" stroke="#000" stroke-width="1.3"/><rect x="11.1" y="10.6" width="6.8" height="6.8" rx="1.2" fill="#fff" stroke="#000" stroke-width="1.3"/><rect x="3.6" y="3.1" width="3.6" height="3.6" fill="#000"/><rect x="12.6" y="12.1" width="3.6" height="3.6" fill="#000"/></svg><span>S-0000054</span></div>
<svg class="a" style="left:506.5px;top:406px" width="12" height="8" viewBox="0 0 12 8"><path d="M0.5 1.5L6 7 11.5 1.5" fill="#d54a2c" stroke="#161616" stroke-width="1.1"/><rect x="0" y="0" width="12" height="2" fill="#d54a2c"/></svg>
<div class="mk" style="left:459px;top:389px;background:#d54a2c;color:#fff"><svg class="a" style="left:0;top:0" width="20" height="18" viewBox="0 0 20 18"><rect width="20" height="18" fill="#fff"/><rect x="2.5" y="1.8" width="15" height="14" rx="3" fill="#d2d2d2" stroke="#111" stroke-width="1.3"/><path d="M6.8 9l2.2 2.2 4.4-4.4" stroke="#111" stroke-width="1.4" fill="none"/></svg><svg class="a" style="right:0;top:0" width="20" height="18" viewBox="0 0 20 18"><rect width="20" height="18" fill="#a3a3a3"/><rect width="1.2" height="18" fill="#fff"/><rect x="2.1" y="1.6" width="6.8" height="6.8" rx="1.2" fill="#fff" stroke="#000" stroke-width="1.3"/><rect x="11.1" y="1.6" width="6.8" height="6.8" rx="1.2" fill="#fff" stroke="#000" stroke-width="1.3"/><rect x="2.1" y="10.6" width="6.8" height="6.8" rx="1.2" fill="#fff" stroke="#000" stroke-width="1.3"/><rect x="11.1" y="10.6" width="6.8" height="6.8" rx="1.2" fill="#fff" stroke="#000" stroke-width="1.3"/><rect x="3.6" y="3.1" width="3.6" height="3.6" fill="#000"/><rect x="12.6" y="12.1" width="3.6" height="3.6" fill="#000"/></svg><span>S-0000044</span></div>
<svg class="a" style="left:286.5px;top:429px" width="12" height="8" viewBox="0 0 12 8"><path d="M0.5 1.5L6 7 11.5 1.5" fill="#d54a2c" stroke="#161616" stroke-width="1.1"/><rect x="0" y="0" width="12" height="2" fill="#d54a2c"/></svg>
<div class="mk" style="left:239px;top:412px;background:#d54a2c;color:#fff;border-radius:0 2px 2px 0"><svg class="a" style="left:0;top:0" width="20" height="18" viewBox="0 0 20 18"><rect width="20" height="18" fill="#fff"/><circle cx="10" cy="9" r="7.8" fill="#fff" stroke="#111" stroke-width="1.2"/><path d="M10 4.5V11.3 M6.5 8.3L10 11.6 13.5 8.3 M6.3 13.6H13.7" stroke="#111" stroke-width="1.2" fill="none"/></svg><svg class="a" style="right:0;top:0" width="20" height="18" viewBox="0 0 20 18"><rect width="20" height="18" fill="#ffffff"/><rect width="1.2" height="18" fill="#fff"/><rect x="2.1" y="1.6" width="6.8" height="6.8" rx="1.2" fill="#fff" stroke="#000" stroke-width="1.3"/><rect x="11.1" y="1.6" width="6.8" height="6.8" rx="1.2" fill="#fff" stroke="#000" stroke-width="1.3"/><rect x="2.1" y="10.6" width="6.8" height="6.8" rx="1.2" fill="#fff" stroke="#000" stroke-width="1.3"/><rect x="11.1" y="10.6" width="6.8" height="6.8" rx="1.2" fill="#fff" stroke="#000" stroke-width="1.3"/></svg><span>S-0000002</span></div>
<div class="mx" style="left:225px;top:412px"><svg width="13" height="18" viewBox="0 0 13 18"><path d="M5 3.2h3l-.5 8.6h-2z" fill="#000"/><circle cx="6.5" cy="14.3" r="1.6" fill="#000"/></svg></div>
<svg class="a" style="left:646.5px;top:423px" width="12" height="8" viewBox="0 0 12 8"><path d="M0.5 1.5L6 7 11.5 1.5" fill="#d54a2c" stroke="#161616" stroke-width="1.1"/><rect x="0" y="0" width="12" height="2" fill="#d54a2c"/></svg>
<div class="mk" style="left:599px;top:406px;background:#d54a2c;color:#fff"><svg class="a" style="left:0;top:0" width="20" height="18" viewBox="0 0 20 18"><rect width="20" height="18" fill="#fff"/><path d="M10 2L17.6 16H2.4z" fill="#000" stroke="#000" stroke-width="1" stroke-linejoin="round"/><path d="M10 6.5V12" stroke="#fff" stroke-width="1.8"/><rect x="9.1" y="13" width="1.8" height="1.6" fill="#fff"/></svg><svg class="a" style="right:0;top:0" width="20" height="18" viewBox="0 0 20 18"><rect width="20" height="18" fill="#a3a3a3"/><rect width="1.2" height="18" fill="#fff"/><rect x="2.1" y="1.6" width="6.8" height="6.8" rx="1.2" fill="#fff" stroke="#000" stroke-width="1.3"/><rect x="11.1" y="1.6" width="6.8" height="6.8" rx="1.2" fill="#fff" stroke="#000" stroke-width="1.3"/><rect x="2.1" y="10.6" width="6.8" height="6.8" rx="1.2" fill="#fff" stroke="#000" stroke-width="1.3"/><rect x="11.1" y="10.6" width="6.8" height="6.8" rx="1.2" fill="#fff" stroke="#000" stroke-width="1.3"/><rect x="3.6" y="3.1" width="3.6" height="3.6" fill="#000"/><rect x="12.6" y="12.1" width="3.6" height="3.6" fill="#000"/></svg><span>S-0000052</span></div>
<svg class="a" style="left:860.5px;top:504px" width="12" height="8" viewBox="0 0 12 8"><path d="M0.5 1.5L6 7 11.5 1.5" fill="#d54a2c" stroke="#161616" stroke-width="1.1"/><rect x="0" y="0" width="12" height="2" fill="#d54a2c"/></svg>
<div class="mk" style="left:813px;top:487px;background:#d54a2c;color:#fff;border-radius:0 2px 2px 0"><svg class="a" style="left:0;top:0" width="20" height="18" viewBox="0 0 20 18"><rect width="20" height="18" fill="#fff"/><rect x="2.5" y="1.8" width="15" height="14" rx="3" fill="#d2d2d2" stroke="#111" stroke-width="1.3"/><path d="M6.8 9l2.2 2.2 4.4-4.4" stroke="#111" stroke-width="1.4" fill="none"/></svg><svg class="a" style="right:0;top:0" width="20" height="18" viewBox="0 0 20 18"><rect width="20" height="18" fill="#ffffff"/><rect width="1.2" height="18" fill="#fff"/><rect x="2.1" y="1.6" width="6.8" height="6.8" rx="1.2" fill="#fff" stroke="#000" stroke-width="1.3"/><rect x="11.1" y="1.6" width="6.8" height="6.8" rx="1.2" fill="#fff" stroke="#000" stroke-width="1.3"/><rect x="2.1" y="10.6" width="6.8" height="6.8" rx="1.2" fill="#fff" stroke="#000" stroke-width="1.3"/><rect x="11.1" y="10.6" width="6.8" height="6.8" rx="1.2" fill="#fff" stroke="#000" stroke-width="1.3"/></svg><span>S-0000039</span></div>
<div class="mx" style="left:799px;top:487px"><svg width="13" height="18" viewBox="0 0 13 18"><path d="M5 3.2h3l-.5 8.6h-2z" fill="#000"/><circle cx="6.5" cy="14.3" r="1.6" fill="#000"/></svg></div>
<svg class="a" style="left:319.5px;top:532px" width="12" height="8" viewBox="0 0 12 8"><path d="M0.5 1.5L6 7 11.5 1.5" fill="#3b7bbf" stroke="#161616" stroke-width="1.1"/><rect x="0" y="0" width="12" height="2" fill="#3b7bbf"/></svg>
<div class="mk" style="left:272px;top:515px;background:#3b7bbf;color:#fff"><svg class="a" style="left:0;top:0" width="20" height="18" viewBox="0 0 20 18"><rect width="20" height="18" fill="#fff"/><circle cx="10" cy="9" r="8.3" fill="#000"/><path d="M5.5 5.2H14.5 M10 14.5V6.5 M6.6 10L10 6.6 13.4 10" stroke="#fff" stroke-width="1.6" fill="none"/></svg><svg class="a" style="right:0;top:0" width="20" height="18" viewBox="0 0 20 18"><rect width="20" height="18" fill="#ffffff"/><rect width="1.2" height="18" fill="#fff"/><rect x="2.1" y="1.6" width="6.8" height="6.8" rx="1.2" fill="#fff" stroke="#000" stroke-width="1.3"/><rect x="11.1" y="1.6" width="6.8" height="6.8" rx="1.2" fill="#fff" stroke="#000" stroke-width="1.3"/><rect x="2.1" y="10.6" width="6.8" height="6.8" rx="1.2" fill="#fff" stroke="#000" stroke-width="1.3"/><rect x="11.1" y="10.6" width="6.8" height="6.8" rx="1.2" fill="#fff" stroke="#000" stroke-width="1.3"/></svg><span>S-0000064</span></div>
<svg class="a" style="left:562.5px;top:545px" width="12" height="8" viewBox="0 0 12 8"><path d="M0.5 1.5L6 7 11.5 1.5" fill="#d54a2c" stroke="#161616" stroke-width="1.1"/><rect x="0" y="0" width="12" height="2" fill="#d54a2c"/></svg>
<div class="mk" style="left:515px;top:528px;background:#d54a2c;color:#fff"><svg class="a" style="left:0;top:0" width="20" height="18" viewBox="0 0 20 18"><rect width="20" height="18" fill="#fff"/><circle cx="10" cy="9" r="8.3" fill="#3a3a3a"/><path d="M6 9.2A4 4 0 0 1 12.6 6.2" stroke="#fff" stroke-width="2" fill="none"/><path d="M14.8 3.8L14.6 8.4 10.6 7z" fill="#fff"/><path d="M14 8.8A4 4 0 0 1 7.4 11.8" stroke="#fff" stroke-width="2" fill="none"/><path d="M5.2 14.2L5.4 9.6 9.4 11z" fill="#fff"/></svg><svg class="a" style="right:0;top:0" width="20" height="18" viewBox="0 0 20 18"><rect width="20" height="18" fill="#a3a3a3"/><rect width="1.2" height="18" fill="#fff"/><rect x="2.1" y="1.6" width="6.8" height="6.8" rx="1.2" fill="#fff" stroke="#000" stroke-width="1.3"/><rect x="11.1" y="1.6" width="6.8" height="6.8" rx="1.2" fill="#fff" stroke="#000" stroke-width="1.3"/><rect x="2.1" y="10.6" width="6.8" height="6.8" rx="1.2" fill="#fff" stroke="#000" stroke-width="1.3"/><rect x="11.1" y="10.6" width="6.8" height="6.8" rx="1.2" fill="#fff" stroke="#000" stroke-width="1.3"/><rect x="3.6" y="3.1" width="3.6" height="3.6" fill="#000"/><rect x="12.6" y="12.1" width="3.6" height="3.6" fill="#000"/></svg><span>S-0000053</span></div>
<svg class="a" style="left:474.5px;top:600px" width="12" height="8" viewBox="0 0 12 8"><path d="M0.5 1.5L6 7 11.5 1.5" fill="#d54a2c" stroke="#161616" stroke-width="1.1"/><rect x="0" y="0" width="12" height="2" fill="#d54a2c"/></svg>
<div class="mk" style="left:427px;top:583px;background:#d54a2c;color:#fff"><svg class="a" style="left:0;top:0" width="20" height="18" viewBox="0 0 20 18"><rect width="20" height="18" fill="#fff"/><circle cx="10" cy="9" r="8.3" fill="#000"/><path d="M5.5 5.2H14.5 M10 14.5V6.5 M6.6 10L10 6.6 13.4 10" stroke="#fff" stroke-width="1.6" fill="none"/></svg><svg class="a" style="right:0;top:0" width="20" height="18" viewBox="0 0 20 18"><rect width="20" height="18" fill="#a3a3a3"/><rect width="1.2" height="18" fill="#fff"/><rect x="2.1" y="1.6" width="6.8" height="6.8" rx="1.2" fill="#fff" stroke="#000" stroke-width="1.3"/><rect x="11.1" y="1.6" width="6.8" height="6.8" rx="1.2" fill="#fff" stroke="#000" stroke-width="1.3"/><rect x="2.1" y="10.6" width="6.8" height="6.8" rx="1.2" fill="#fff" stroke="#000" stroke-width="1.3"/><rect x="11.1" y="10.6" width="6.8" height="6.8" rx="1.2" fill="#fff" stroke="#000" stroke-width="1.3"/><rect x="3.6" y="3.1" width="3.6" height="3.6" fill="#000"/><rect x="12.6" y="12.1" width="3.6" height="3.6" fill="#000"/></svg><span>R-00000026</span></div>
<svg class="a" style="left:399.5px;top:623px" width="12" height="8" viewBox="0 0 12 8"><path d="M0.5 1.5L6 7 11.5 1.5" fill="#4fa27e" stroke="#161616" stroke-width="1.1"/><path d="M0.5 1.5L6 7V1.5z" fill="#fdc94f"/><path d="M0.5 1.5L6 7" stroke="#161616" stroke-width="1.1"/><rect x="0" y="0" width="12" height="2" fill="none"/></svg>
<div class="mk" style="left:352px;top:606px;background:linear-gradient(90deg,#fdc94f 50%,#4fa27e 50%);color:#2a2a2a"><svg class="a" style="right:0;top:0" width="20" height="18" viewBox="0 0 20 18"><rect width="20" height="18" fill="#a3a3a3"/><rect width="1.2" height="18" fill="#fff"/><rect x="2.1" y="1.6" width="6.8" height="6.8" rx="1.2" fill="#fff" stroke="#000" stroke-width="1.3"/><rect x="11.1" y="1.6" width="6.8" height="6.8" rx="1.2" fill="#fff" stroke="#000" stroke-width="1.3"/><rect x="2.1" y="10.6" width="6.8" height="6.8" rx="1.2" fill="#fff" stroke="#000" stroke-width="1.3"/><rect x="11.1" y="10.6" width="6.8" height="6.8" rx="1.2" fill="#fff" stroke="#000" stroke-width="1.3"/><rect x="3.6" y="3.1" width="3.6" height="3.6" fill="#000"/><rect x="12.6" y="12.1" width="3.6" height="3.6" fill="#000"/></svg><span>S-0000001</span></div>
<svg class="a" style="left:613.5px;top:624px" width="12" height="8" viewBox="0 0 12 8"><path d="M0.5 1.5L6 7 11.5 1.5" fill="#4fa27e" stroke="#161616" stroke-width="1.1"/><path d="M0.5 1.5L6 7V1.5z" fill="#fdc94f"/><path d="M0.5 1.5L6 7" stroke="#161616" stroke-width="1.1"/><rect x="0" y="0" width="12" height="2" fill="none"/></svg>
<div class="mk" style="left:566px;top:607px;background:linear-gradient(90deg,#fdc94f 50%,#4fa27e 50%);color:#2a2a2a;border-radius:0 2px 2px 0"><svg class="a" style="right:0;top:0" width="20" height="18" viewBox="0 0 20 18"><rect width="20" height="18" fill="#ffffff"/><rect width="1.2" height="18" fill="#fff"/><rect x="2.1" y="1.6" width="6.8" height="6.8" rx="1.2" fill="#fff" stroke="#000" stroke-width="1.3"/><rect x="11.1" y="1.6" width="6.8" height="6.8" rx="1.2" fill="#fff" stroke="#000" stroke-width="1.3"/><rect x="2.1" y="10.6" width="6.8" height="6.8" rx="1.2" fill="#fff" stroke="#000" stroke-width="1.3"/><rect x="11.1" y="10.6" width="6.8" height="6.8" rx="1.2" fill="#fff" stroke="#000" stroke-width="1.3"/></svg><span>S-0000061</span></div>
<div class="mx" style="left:552px;top:607px"><svg width="13" height="18" viewBox="0 0 13 18"><path d="M5 3.2h3l-.5 8.6h-2z" fill="#000"/><circle cx="6.5" cy="14.3" r="1.6" fill="#000"/></svg></div>
<svg class="a" style="left:685.5px;top:658px" width="12" height="8" viewBox="0 0 12 8"><path d="M0.5 1.5L6 7 11.5 1.5" fill="#4fa27e" stroke="#161616" stroke-width="1.1"/><rect x="0" y="0" width="12" height="2" fill="#4fa27e"/></svg>
<div class="mk" style="left:638px;top:641px;background:#4fa27e;color:#fff;border-radius:0 2px 2px 0"><svg class="a" style="right:0;top:0" width="20" height="18" viewBox="0 0 20 18"><rect width="20" height="18" fill="#a3a3a3"/><rect width="1.2" height="18" fill="#fff"/><rect x="2.1" y="1.6" width="6.8" height="6.8" rx="1.2" fill="#fff" stroke="#000" stroke-width="1.3"/><rect x="11.1" y="1.6" width="6.8" height="6.8" rx="1.2" fill="#fff" stroke="#000" stroke-width="1.3"/><rect x="2.1" y="10.6" width="6.8" height="6.8" rx="1.2" fill="#fff" stroke="#000" stroke-width="1.3"/><rect x="11.1" y="10.6" width="6.8" height="6.8" rx="1.2" fill="#fff" stroke="#000" stroke-width="1.3"/><rect x="3.6" y="3.1" width="3.6" height="3.6" fill="#000"/><rect x="12.6" y="12.1" width="3.6" height="3.6" fill="#000"/></svg><span></span></div>
<div class="mx" style="left:624px;top:641px"><svg width="13" height="18" viewBox="0 0 13 18"><path d="M5 3.2h3l-.5 8.6h-2z" fill="#000"/><circle cx="6.5" cy="14.3" r="1.6" fill="#000"/></svg></div>
<svg class="a" style="left:709.5px;top:653px" width="12" height="8" viewBox="0 0 12 8"><path d="M0.5 1.5L6 7 11.5 1.5" fill="#d54a2c" stroke="#161616" stroke-width="1.1"/><rect x="0" y="0" width="12" height="2" fill="#d54a2c"/></svg>
<div class="mk" style="left:662px;top:636px;background:#d54a2c;color:#fff"><svg class="a" style="left:0;top:0" width="20" height="18" viewBox="0 0 20 18"><rect width="20" height="18" fill="#fff"/><circle cx="10" cy="9" r="8.3" fill="#3a3a3a"/><path d="M6 9.2A4 4 0 0 1 12.6 6.2" stroke="#fff" stroke-width="2" fill="none"/><path d="M14.8 3.8L14.6 8.4 10.6 7z" fill="#fff"/><path d="M14 8.8A4 4 0 0 1 7.4 11.8" stroke="#fff" stroke-width="2" fill="none"/><path d="M5.2 14.2L5.4 9.6 9.4 11z" fill="#fff"/></svg><svg class="a" style="right:0;top:0" width="20" height="18" viewBox="0 0 20 18"><rect width="20" height="18" fill="#a3a3a3"/><rect width="1.2" height="18" fill="#fff"/><rect x="2.1" y="1.6" width="6.8" height="6.8" rx="1.2" fill="#fff" stroke="#000" stroke-width="1.3"/><rect x="11.1" y="1.6" width="6.8" height="6.8" rx="1.2" fill="#fff" stroke="#000" stroke-width="1.3"/><rect x="2.1" y="10.6" width="6.8" height="6.8" rx="1.2" fill="#fff" stroke="#000" stroke-width="1.3"/><rect x="11.1" y="10.6" width="6.8" height="6.8" rx="1.2" fill="#fff" stroke="#000" stroke-width="1.3"/><rect x="3.6" y="3.1" width="3.6" height="3.6" fill="#000"/><rect x="12.6" y="12.1" width="3.6" height="3.6" fill="#000"/></svg><span>S-0000023</span></div>
<svg class="a" style="left:734.5px;top:739px" width="12" height="8" viewBox="0 0 12 8"><path d="M0.5 1.5L6 7 11.5 1.5" fill="#4fa27e" stroke="#161616" stroke-width="1.1"/><rect x="0" y="0" width="12" height="2" fill="#4fa27e"/></svg>
<div class="mk" style="left:687px;top:722px;background:#4fa27e;color:#fff"><span>S-0000057</span></div>
<svg class="a" style="left:443.5px;top:759px" width="12" height="8" viewBox="0 0 12 8"><path d="M0.5 1.5L6 7 11.5 1.5" fill="#d54a2c" stroke="#161616" stroke-width="1.1"/><rect x="0" y="0" width="12" height="2" fill="#d54a2c"/></svg>
<div class="mk" style="left:396px;top:742px;background:#d54a2c;color:#fff"><svg class="a" style="left:0;top:0" width="20" height="18" viewBox="0 0 20 18"><rect width="20" height="18" fill="#fff"/><rect x="2.5" y="1.8" width="15" height="14" rx="3" fill="#d2d2d2" stroke="#111" stroke-width="1.3"/><path d="M6.8 9l2.2 2.2 4.4-4.4" stroke="#111" stroke-width="1.4" fill="none"/></svg><svg class="a" style="right:0;top:0" width="20" height="18" viewBox="0 0 20 18"><rect width="20" height="18" fill="#a3a3a3"/><rect width="1.2" height="18" fill="#fff"/><rect x="2.1" y="1.6" width="6.8" height="6.8" rx="1.2" fill="#fff" stroke="#000" stroke-width="1.3"/><rect x="11.1" y="1.6" width="6.8" height="6.8" rx="1.2" fill="#fff" stroke="#000" stroke-width="1.3"/><rect x="2.1" y="10.6" width="6.8" height="6.8" rx="1.2" fill="#fff" stroke="#000" stroke-width="1.3"/><rect x="11.1" y="10.6" width="6.8" height="6.8" rx="1.2" fill="#fff" stroke="#000" stroke-width="1.3"/><rect x="3.6" y="3.1" width="3.6" height="3.6" fill="#000"/><rect x="12.6" y="12.1" width="3.6" height="3.6" fill="#000"/></svg><span>S-0000046</span></div>
<svg class="a" style="left:802.5px;top:808px" width="12" height="8" viewBox="0 0 12 8"><path d="M0.5 1.5L6 7 11.5 1.5" fill="#d54a2c" stroke="#161616" stroke-width="1.1"/><rect x="0" y="0" width="12" height="2" fill="#d54a2c"/></svg>
<div class="mk" style="left:755px;top:791px;background:#d54a2c;color:#fff;border-radius:0 2px 2px 0"><svg class="a" style="left:0;top:0" width="20" height="18" viewBox="0 0 20 18"><rect width="20" height="18" fill="#fff"/><circle cx="10" cy="9" r="7.8" fill="#fff" stroke="#111" stroke-width="1.2"/><path d="M10 4.5V11.3 M6.5 8.3L10 11.6 13.5 8.3 M6.3 13.6H13.7" stroke="#111" stroke-width="1.2" fill="none"/></svg><svg class="a" style="right:0;top:0" width="20" height="18" viewBox="0 0 20 18"><rect width="20" height="18" fill="#ffffff"/><rect width="1.2" height="18" fill="#fff"/><rect x="2.1" y="1.6" width="6.8" height="6.8" rx="1.2" fill="#fff" stroke="#000" stroke-width="1.3"/><rect x="11.1" y="1.6" width="6.8" height="6.8" rx="1.2" fill="#fff" stroke="#000" stroke-width="1.3"/><rect x="2.1" y="10.6" width="6.8" height="6.8" rx="1.2" fill="#fff" stroke="#000" stroke-width="1.3"/><rect x="11.1" y="10.6" width="6.8" height="6.8" rx="1.2" fill="#fff" stroke="#000" stroke-width="1.3"/></svg><span>S-0000003</span></div>
<div class="mx" style="left:741px;top:791px"><svg width="13" height="18" viewBox="0 0 13 18"><path d="M5 3.2h3l-.5 8.6h-2z" fill="#000"/><circle cx="6.5" cy="14.3" r="1.6" fill="#000"/></svg></div>
<svg class="a" style="left:404px;top:422px" width="34" height="48" viewBox="740 496 34 48"><path d="M747 502.5V534l8.5-6.5 6 11c.8 1.6 2.6 1.8 3.8.6l.7-1.4-5.5-11.2 10-.9z" fill="#fff" stroke="#000" stroke-width="2" stroke-linejoin="round"/></svg>
<div class="t" style="right:4px;bottom:3px;font-size:12px;color:#333;background:rgba(243,239,227,.8);padding:1px 2px">&copy; OpenStreetMap contributors</div><!--MARKEND--></div>
<div id="rp" class="a">
<div class="t" style="left:8px;top:11px;font-size:15.4px;color:#8f8f8f">Select Item</div>
<svg class="a" style="left:8px;top:42px" width="21" height="19" viewBox="0 0 21 19" fill="none" stroke="#b0b0b0" stroke-width="1.2"><path d="M0.6 0.6H20.4V18.4H0.6z M0.6 4.5H20.4 M7 4.5V18.4 M7 11H20.4"/></svg>
<svg class="a" style="left:45px;top:41px" width="20" height="20" viewBox="0 0 20 20" fill="none" stroke="#b0b0b0" stroke-width="1.2"><path d="M10 13.5S5.5 9 5.5 5.5C5.5 2.8 7.5 0.7 10 0.7s4.5 2.1 4.5 4.8c0 3.5-4.5 8-4.5 8z"/><circle cx="10" cy="5.5" r="1.7" fill="#b0b0b0"/><path d="M6.8 11L0.8 19.3H19.2L13.2 11"/></svg>
<svg class="a" style="left:81px;top:41px" width="20" height="21" viewBox="0 0 20 21" fill="none" stroke="#b0b0b0" stroke-width="1.2"><path d="M9.5 18.6H0.6V0.6H10l5 5V10 M10 0.6V5.6H15"/><circle cx="14.5" cy="14.5" r="3.3"/><path d="M12.2 16.8L9.5 19.8"/></svg>
<svg class="a" style="left:109px;top:51px" width="8" height="5" viewBox="0 0 8 5"><path d="M0 0H8L4 5z" fill="#a8a8a8"/></svg>
<svg class="a" style="left:131px;top:45px" width="21" height="13" viewBox="0 0 21 13" fill="none" stroke="#b0b0b0" stroke-width="1.2"><path d="M0.7 6.5C3 2.8 6.5 0.7 10.5 0.7s7.5 2.1 9.8 5.8c-2.3 3.7-5.8 5.8-9.8 5.8S3 10.2 0.7 6.5z"/><circle cx="10.5" cy="6.5" r="2.6"/></svg>
<svg class="a" style="left:160px;top:51px" width="8" height="5" viewBox="0 0 8 5"><path d="M0 0H8L4 5z" fill="#a8a8a8"/></svg>
<svg class="a" style="left:182px;top:41px" width="21" height="21" viewBox="0 0 21 21" fill="none" stroke="#b0b0b0" stroke-width="1.2"><path d="M8 13.5H0.6V0.6H7.5L10.5 3.6V6.5 M7.5 0.6V3.6H10.5"/><path d="M8 6.5H15.5L20.4 11.4V20.4H8z M15.5 6.5V11.4H20.4"/><path d="M2.5 5H6 M2.5 8H6 M2.5 11H6 M10.5 12H14 M10.5 15H18 M10.5 18H18" stroke-width="1"/></svg>
<div class="a" style="left:0;top:68px;width:349px;height:1px;background:#cfcfcf"></div>
<div class="t" style="left:100px;top:488px;font-size:19.8px;color:#1a73c6">No item selected</div>
</div>
<div id="status" class="a">
<div class="sb" style="left:1560px;width:83px">Scaffolds: 25</div>
<div class="sb" style="left:1645px;width:181px">GMT Standard Time (UTC+01:00)</div>
<div class="sb" style="left:1828px;width:74px;text-align:left;padding-left:31px">Admin</div>
<svg class="a" style="left:1838px;top:5px" width="17" height="17" viewBox="0 0 17 17" fill="none" stroke="#fff" stroke-width="1.1"><circle cx="8.5" cy="8.5" r="7.8"/><circle cx="8.5" cy="6.5" r="3"/><path d="M3.3 14.3c.8-2.5 2.8-4 5.2-4s4.4 1.5 5.2 4"/></svg>
</div>
</body></html>
